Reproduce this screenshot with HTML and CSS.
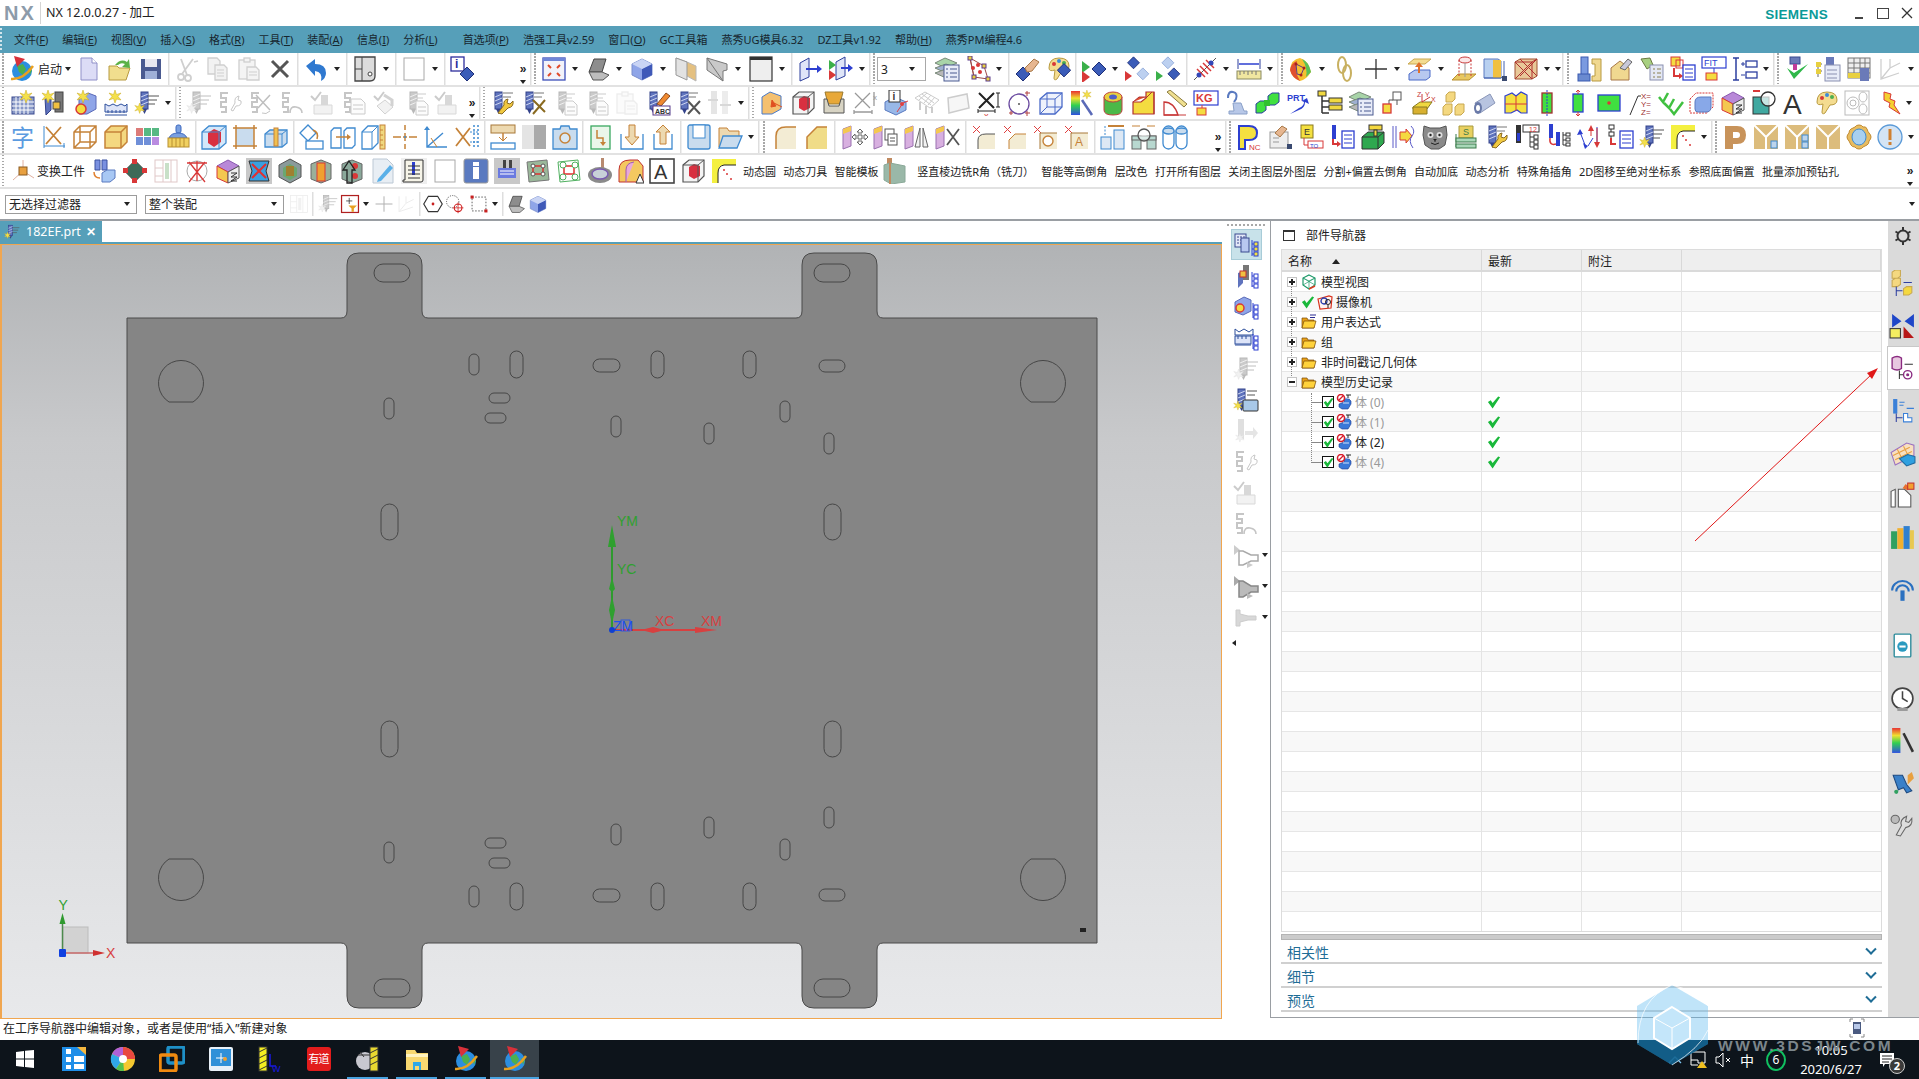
FILE: index.html
```html
<!DOCTYPE html>
<html lang="zh-CN">
<head>
<meta charset="utf-8">
<title>NX 12.0.0.27 - 加工</title>
<link rel="stylesheet" href="styles.css">
</head>
<body>
<svg class="defs" aria-hidden="true"><defs>
<g id="dr"><rect x="5" y="2" width="7" height="17" fill="#5f73bd" stroke="#33428a"/><path d="M5 7l7-3M5 11l7-3M5 15l7-3" stroke="#cdd5f0"/><path d="M6 19l2.500 5 2.500-5z" fill="#33428a"/></g>
<path id="ss" d="M11 3H4v5h5v4H4v5h5v5H4" fill="none" stroke="#6a6a6a" stroke-width="2"/>
<path id="star" d="M7 0l1.500 4.500L13 3l-3 3.500 3 3.500-4.500-1L7 13l-1.500-4.500L1 10l3-3.500L1 3l4.500 1.500z" fill="#f4e04a" stroke="#c8a820" stroke-width=".5"/>
<path id="dia" d="M8 1l7 7-7 7-7-7z" fill="#3b5cb8" stroke="#1e2f78"/>
<path id="ldia" d="M8 1l7 7-7 7-7-7z" fill="#bcd0f0" stroke="#8ea8d8"/>
<symbol id="globe" viewBox="0 0 26 26"><circle cx="13" cy="15" r="10" fill="#2c8ee0"/><path d="M8 10l6-2 3 5-3 6-4-3zM19 12l4 2-2 5z" fill="#4caf50"/><path d="M2 23Q14 24 24 10" fill="none" stroke="#e8a020" stroke-width="2.500"/><path d="M5 0l11 3-8 8z" fill="#d8313a"/></symbol>
<symbol id="doc" viewBox="0 0 26 26"><path d="M5 2h11l5 5v17H5z" fill="#dcdcf6" stroke="#8f8fc8"/><path d="M16 2v5h5" fill="#fff" stroke="#8f8fc8"/></symbol>
<symbol id="open" viewBox="0 0 26 26"><path d="M2 10h8l2 2h11l-4 12H2z" fill="#f1de8e" stroke="#b79a40"/><path d="M8 9q6-7 12-3l2-3 1 9-8-1 3-3q-4-2-7 1z" fill="#5cb247"/></symbol>
<symbol id="save" viewBox="0 0 26 26"><rect x="3" y="3" width="20" height="20" fill="#4a5a90"/><rect x="7" y="3" width="12" height="8" fill="#e8e8f0"/><rect x="7" y="15" width="12" height="8" fill="#9fb0d8"/></symbol>
<symbol id="cut" viewBox="0 0 26 26"><g fill="none" stroke="#cfcfcf" stroke-width="1.800"><circle cx="7" cy="21" r="3"/><circle cx="14" cy="22" r="3"/><path d="M8 18L19 3M13 19L7 3M20 6l4-1"/></g></symbol>
<symbol id="copy" viewBox="0 0 26 26"><g fill="#f2f2f2" stroke="#cfcfcf" stroke-width="1.300"><path d="M3 2h9l3 3v13H3z"/><path d="M10 9h9l3 3v12H10z"/></g><path d="M12 14h7M12 17h7M12 20h7" stroke="#cfcfcf"/></symbol>
<symbol id="paste" viewBox="0 0 26 26"><g fill="#f4f4f4" stroke="#cfcfcf" stroke-width="1.300"><rect x="3" y="4" width="16" height="19"/><rect x="8" y="2" width="6" height="4"/><path d="M11 11h9l3 3v10H11z"/></g><path d="M13 16h8M13 19h8" stroke="#cfcfcf"/></symbol>
<symbol id="xd" viewBox="0 0 26 26"><path d="M5 5l16 16M21 5L5 21" stroke="#555" stroke-width="3"/></symbol>
<symbol id="undo" viewBox="0 0 26 26"><path d="M3 10l9-7v5q11 0 11 9 0 5-5 8 2-9-6-10v5z" fill="#2f79d0"/></symbol>
<symbol id="blk" viewBox="0 0 26 26"><path d="M3 1h20v19q0 5-5 5H3z" fill="#dcdcdc" stroke="#444" stroke-width="1.300"/><path d="M3 13h7M10 1v24" stroke="#444"/><circle cx="18" cy="18" r="2" fill="#fff" stroke="#444"/></symbol>
<symbol id="wbox" viewBox="0 0 26 26"><rect x="3" y="2" width="20" height="22" fill="#fff" stroke="#a8a8a8"/></symbol>
<symbol id="info" viewBox="0 0 26 26"><rect x="1" y="1" width="13" height="14" fill="#fff" stroke="#2d2d9c" stroke-width="1.300"/><text x="5" y="12" font-size="12" font-weight="700" fill="#2d2d9c">i</text><use href="#dia" x="9" y="10"/></symbol>
<symbol id="fit" viewBox="0 0 26 26"><rect x="2" y="2" width="22" height="22" fill="#f2f3fa" stroke="#3d4fb8" stroke-width="1.300"/><rect x="2" y="2" width="22" height="3" fill="#6f86d8"/><path d="M7 9l3 3M19 9l-3 3M7 20l3-3M19 20l-3-3" stroke="#e04a2a" stroke-width="2"/></symbol>
<symbol id="lap" viewBox="0 0 26 26"><path d="M9 3h12l-4 13H4z" fill="#8d8d8d" stroke="#444"/><path d="M4 16h13l7 3-6 5H8z" fill="#bdbdbd" stroke="#555"/></symbol>
<symbol id="cube" viewBox="0 0 26 26"><path d="M3 8l10-5 10 5v11l-10 5-10-5z" fill="#8fa5e8" stroke="#7a8ecc"/><path d="M13 13v11l10-5V8z" fill="#3f59b8"/><path d="M3 8l10 5 10-5-10-5z" fill="#c9d4f4"/></symbol>
<symbol id="tan" viewBox="0 0 26 26"><path d="M3 2l11 4 9 4v15L14 20 3 15z" fill="#e4c080" stroke="#b8b8b8"/><path d="M3 2v17l11 5V6z" fill="#e2e2e2" stroke="#999"/></symbol>
<symbol id="slant" viewBox="0 0 26 26"><path d="M3 2l20 6v6l-4 1v10L3 14z" fill="#c9c9c9" stroke="#777"/><path d="M3 2l16 23" stroke="#777" fill="none"/></symbol>
<symbol id="hdr" viewBox="0 0 26 26"><rect x="2" y="1" width="22" height="24" fill="#eee" stroke="#333" stroke-width="1.200"/><rect x="2" y="1" width="22" height="3" fill="#333"/></symbol>
<symbol id="mv1" viewBox="0 0 26 26"><path d="M3 7l9-5v19l-9 4z" fill="#dfe5f8" stroke="#2d3f9c"/><path d="M9 13h14" stroke="#2d3fd0" stroke-width="2"/><path d="M20 9l5 4-5 4z" fill="#2d3fd0"/></symbol>
<symbol id="mv2" viewBox="0 0 26 26"><path d="M8 6l9-5v19l-9 4z" fill="#dfe5f8" stroke="#2d3f9c"/><path d="M1 4l7 5-7 5z" fill="#3bb04a"/><path d="M1 14l7 5-7 5z" fill="#d83838"/><path d="M13 12h10" stroke="#2d3fd0" stroke-width="2"/><path d="M20 8l5 4-5 4z" fill="#2d3fd0"/></symbol>
<symbol id="lay" viewBox="0 0 26 26"><g stroke="#7a8a7a"><path d="M1 7l10-5 12 5-11 5z" fill="#a8d4a8"/><path d="M1 12l11 5 11-5-11-4z" fill="#9fb0d0"/><path d="M1 17l11 5 11-5-11-4z" fill="#b8b8b8"/></g><rect x="10" y="9" width="15" height="16" fill="#e8ecf8" stroke="#4a5a90"/><path d="M12 13h2M16 13h7M12 17h2M16 17h7M12 21h2M16 21h7" stroke="#4a5a90"/></symbol>
<symbol id="pts" viewBox="0 0 26 26"><path d="M5 2l14 8 4 13-14-2z" fill="#fff" stroke="#9a4a4a"/><path d="M5 2l4 19" stroke="#9a4a4a"/><g fill="#d83838"><circle cx="13" cy="9" r="2"/><circle cx="8" cy="12" r="2"/><circle cx="15" cy="16" r="2"/></g><g fill="#e8d040" stroke="#5a3a8a"><rect x="3" y="0" width="4" height="4"/><rect x="17" y="8" width="4" height="4"/><rect x="21" y="21" width="4" height="4"/><rect x="7" y="19" width="4" height="4"/></g></symbol>
<symbol id="hand" viewBox="0 0 26 26"><use href="#dia" x="1" y="10"/><path d="M11 12l9-9 5 3-7 9-5 1z" fill="#e6b690" stroke="#a87848"/></symbol>
<symbol id="pal" viewBox="0 0 26 26"><path d="M4 12Q4 2 14 2t10 8q0 5-7 5l-5 8q-3 2-3-1l1-8Q4 16 4 12z" fill="#f4dc90" stroke="#b89a40"/><g stroke="none"><circle cx="9" cy="8" r="2" fill="#d83838"/><circle cx="14" cy="5" r="2" fill="#3b8cd8"/><circle cx="19" cy="7" r="2" fill="#4caf50"/></g></symbol>
<symbol id="palb" viewBox="0 0 26 26"><use href="#pal"/><use href="#dia" x="12" y="7" transform="scale(.95)"/></symbol>
<symbol id="d1" viewBox="0 0 26 26"><path d="M1 5l8 6-8 6z" fill="#3bb04a"/><path d="M1 15l8 6-8 6z" fill="#d83838"/><use href="#dia" x="10" y="5"/></symbol>
<symbol id="d2" viewBox="0 0 26 26"><use href="#dia" x="2" y="0" transform="scale(.85)"/><use href="#ldia" x="13" y="13" transform="scale(.85)"/><path d="M0 15l7 5-7 5z" fill="#d83838"/></symbol>
<symbol id="d3" viewBox="0 0 26 26"><use href="#ldia" x="6" y="0" transform="scale(.85)"/><use href="#dia" x="13" y="13" transform="scale(.85)"/><path d="M0 15l7 5-7 5z" fill="#3bb04a"/></symbol>
<symbol id="ant" viewBox="0 0 26 26"><path d="M2 24L24 2" stroke="#555"/><path d="M5 13l8 8M8 10l8 8M11 7l8 8M14 4l8 8" stroke="#d83838" stroke-width="1.500"/><circle cx="7" cy="19" r="2.500" fill="#3447b8"/><circle cx="19" cy="7" r="2.500" fill="#3447b8"/></symbol>
<symbol id="rul" viewBox="0 0 26 26"><path d="M2 3v10M24 3v10" stroke="#2d3f9c"/><path d="M3 8h20" stroke="#2d3fd0" stroke-width="1.500"/><rect x="1" y="15" width="24" height="8" fill="#f0e6a0" stroke="#8a8a60"/><path d="M4 15v4M8 15v3M12 15v4M16 15v3M20 15v4" stroke="#777"/></symbol>
<symbol id="heat" viewBox="0 0 26 26"><path d="M2 14Q3 3 12 2q8 2 11 14-5 8-11 9Q4 22 2 14z" fill="#f4c030"/><path d="M2 14Q3 7 9 5 6 16 12 25 4 22 2 14z" fill="#e05030"/><path d="M14 3q7 3 9 13l-5 5q2-9-4-18z" fill="#58c058"/><path d="M8 8l8 4-3 7-4-1z" fill="none" stroke="#5a3a8a"/><g fill="#a82020"><circle cx="8" cy="8" r="1.500"/><circle cx="16" cy="12" r="1.500"/><circle cx="13" cy="19" r="1.500"/></g></symbol>
<symbol id="ring" viewBox="0 0 26 26"><g fill="none" stroke="#c8b060" stroke-width="2"><ellipse cx="10" cy="9" rx="4" ry="8"/><ellipse cx="15" cy="17" rx="4" ry="8"/></g></symbol>
<symbol id="plus" viewBox="0 0 26 26"><path d="M13 3v20M2 13h22" stroke="#333" stroke-width="1.300"/></symbol>
<symbol id="lift" viewBox="0 0 26 26"><path d="M7 3h17l-6 5H1z" fill="#f4dc90" stroke="#c8a850"/><path d="M2 18l6-4h15v7l-4 3H2z" fill="#b8c8f0" stroke="#4a6ac8"/><path d="M12 17V9" stroke="#e0702a" stroke-width="2"/><path d="M8 11l4-5 4 5z" fill="#e0702a"/></symbol>
<symbol id="cyl" viewBox="0 0 26 26"><path d="M1 24l6-6h18l-7 6z" fill="#e8c860" stroke="#b89030"/><ellipse cx="14" cy="4" rx="6" ry="3" fill="#fbe8e8" stroke="#c83838"/><path d="M8 4v16M20 4v16" stroke="#c83838" stroke-dasharray="2 1.500"/><path d="M14 7v14" stroke="#999"/></symbol>
<symbol id="bbx" viewBox="0 0 26 26"><path d="M2 3h14l3 2v17H2z" fill="#b8d0f0" stroke="#5a7ac0"/><path d="M11 4h8v18h-8z" fill="#f0c040"/><path d="M2 22h17l3-2V5" fill="none" stroke="#4060b0"/><rect x="20" y="20" width="5" height="5" fill="#3a4a70"/></symbol>
<symbol id="wcube" viewBox="0 0 26 26"><path d="M2 6l5-3h17v17l-5 3H2z" fill="#e8c898" stroke="#a05030"/><path d="M2 6h17v17M19 6l5-3M2 6l17 17M19 6L2 23M7 3l17 17M24 3L7 20" fill="none" stroke="#b03030"/></symbol>
<symbol id="bolt" viewBox="0 0 26 26"><rect x="4" y="1" width="7" height="19" fill="#7a9ae0" stroke="#3a5ab0"/><rect x="1" y="18" width="12" height="7" fill="#6a8ad0" stroke="#3a5ab0"/><path d="M15 3h9v22h-9v-5h3V8h-3z" fill="#f0d890" stroke="#b89a40"/></symbol>
<symbol id="house" viewBox="0 0 26 26"><path d="M3 12l9-7 9 7v12H3z" fill="#f0d890" stroke="#a87848"/><path d="M12 12l8-9 4 3-7 8z" fill="#c8c8d8" stroke="#666"/></symbol>
<symbol id="lamp" viewBox="0 0 26 26"><path d="M2 3l9-1 3 7-6 4z" fill="#a8d080" stroke="#6a7a40"/><rect x="11" y="9" width="13" height="15" fill="#e4e8f4" stroke="#8a90b0"/><path d="M14 13h2M18 13h4M14 17h2M18 17h4M14 21h2M18 21h4" stroke="#8a8050"/></symbol>
<symbol id="flw" viewBox="0 0 26 26"><rect x="1" y="1" width="9" height="9" fill="#f4dc40" stroke="#d83838"/><rect x="6" y="4" width="7" height="8" fill="none" stroke="#d83838"/><path d="M4 12v8h6" fill="none" stroke="#d83838" stroke-width="2"/><path d="M9 17l4 3-4 3z" fill="#d83838"/><rect x="13" y="9" width="12" height="15" fill="#fff" stroke="#2d3fd0" stroke-width="1.300"/><path d="M15 13h8M15 17h8M15 21h8" stroke="#2d3fd0"/></symbol>
<symbol id="fit2" viewBox="0 0 26 26"><rect x="1" y="1" width="24" height="11" fill="#fff" stroke="#2d3fd0" stroke-width="1.200"/><text x="3" y="10" font-size="9" fill="#2d3fd0">FIT</text><path d="M13 12v5" stroke="#2d3fd0"/><rect x="5" y="17" width="11" height="7" fill="#f4dc40" stroke="#d83838"/></symbol>
<symbol id="lst" viewBox="0 0 26 26"><path d="M4 2v22M1 2h6M1 24h6" stroke="#2d3fa0" stroke-width="1.500"/><path d="M9 8h4M11 6v4M9 19h4" stroke="#2d3fa0"/><rect x="14" y="5" width="11" height="6" fill="#fff" stroke="#2d3fa0" stroke-width="1.300"/><rect x="14" y="16" width="11" height="6" fill="#fff" stroke="#2d3fa0" stroke-width="1.300"/></symbol>
<symbol id="vchk" viewBox="0 0 26 26"><rect x="6" y="1" width="10" height="7" fill="#6a7ab8" stroke="#3a4a90"/><path d="M9 8h4v6h-4z" fill="#c03a9a"/><path d="M3 12l7 11L24 8l-14 9z" fill="#2fb84a"/></symbol>
<symbol id="tre2" viewBox="0 0 26 26"><rect x="11" y="1" width="8" height="9" fill="#6a7ab8"/><rect x="10" y="9" width="15" height="16" fill="#e8ecf8" stroke="#8a90b0"/><path d="M3 8v13M3 8h4M3 15h4" stroke="#666"/><rect x="1" y="6" width="5" height="5" fill="#e8d040"/><rect x="1" y="13" width="5" height="5" fill="#e8d040"/><path d="M12 14h10M12 18h10M12 22h10" stroke="#8a90b0"/></symbol>
<symbol id="tbl" viewBox="0 0 26 26"><rect x="2" y="2" width="22" height="20" fill="#eee" stroke="#777"/><path d="M2 7h22M2 12h22M2 17h22M8 2v20M14 2v20M19 2v20" stroke="#777"/><rect x="2" y="17" width="12" height="5" fill="#e8d040"/><rect x="14" y="12" width="9" height="13" fill="#6a7ab8"/></symbol>
<symbol id="axg" viewBox="0 0 26 26"><path d="M4 3v20l18-6M4 23l9-11 10-5M13 3v9" fill="none" stroke="#cfcfcf" stroke-width="1.300"/></symbol>
<symbol id="a2a" viewBox="0 0 26 26"><rect x="2" y="7" width="22" height="17" fill="#8a9ac8" stroke="#3a4a90"/><path d="M6 7v17M10 7v17M14 7v17M18 7v17M2 12h22M2 16h22M2 20h22" stroke="#fff"/><use href="#star" x="9" y="0"/></symbol>
<symbol id="a2b" viewBox="0 0 26 26"><path d="M4 8l6-1v13l-5 5z" fill="#5f73bd" stroke="#33428a"/><rect x="14" y="2" width="8" height="20" fill="#777" stroke="#444"/><rect x="12" y="12" width="7" height="7" fill="#f0c040" stroke="#444"/><use href="#star"/></symbol>
<symbol id="a2c" viewBox="0 0 26 26"><path d="M7 8l9-5 8 3v13l-9 5H7z" fill="#8fa5e8" stroke="#5a6ab8"/><circle cx="9" cy="19" r="5" fill="#f4dc40" stroke="#d83838" stroke-width="1.500"/><use href="#star" x="4"/></symbol>
<symbol id="a2d" viewBox="0 0 26 26"><path d="M2 14l4 2 4-2 4 2 4-2 4 2 2-2v8H2z" fill="#dde4f8" stroke="#2d4f9c"/><path d="M2 25h22M5 20v3M9 20v3M13 20v3M17 20v3M21 20v3" stroke="#2d4f9c"/><use href="#star" x="5"/></symbol>
<symbol id="drl" viewBox="0 0 26 26"><use href="#dr" x="2"/><path d="M14 6h11M14 10h9M14 14h7" stroke="#555"/><use href="#star" transform="translate(0 13) scale(.8)"/></symbol>
<symbol id="swr" viewBox="0 0 26 26"><use href="#ss"/><path d="M14 20l4-7q-1-6 4-7l-1 4 3 1q1 5-5 5l-3 5z" fill="#fff" stroke="#6a6a6a"/></symbol>
<symbol id="sx" viewBox="0 0 26 26"><use href="#ss"/><path d="M8 5l14 15M22 5L10 18" stroke="#555" stroke-width="1.500"/><path d="M14 23q4 2 8-2" fill="none" stroke="#666"/></symbol>
<symbol id="scv" viewBox="0 0 26 26"><use href="#ss"/><path d="M11 23q0-7 6-6t6 6" fill="none" stroke="#666" stroke-width="1.600"/></symbol>
<symbol id="cktl" viewBox="0 0 26 26"><path d="M1 6l4 4 6-8" fill="none" stroke="#777" stroke-width="2"/><rect x="11" y="5" width="7" height="13" fill="#999"/><path d="M4 15h18v9H4z" fill="#ddd" stroke="#999"/></symbol>
<symbol id="sdoc" viewBox="0 0 26 26"><use href="#ss"/><path d="M10 9h10l4 4v11H10z" fill="#f6f6f6" stroke="#777"/><path d="M12 15h10M12 19h10" stroke="#777"/></symbol>
<symbol id="ckw" viewBox="0 0 26 26"><path d="M2 6l4 4 6-8" fill="none" stroke="#777" stroke-width="2"/><path d="M5 16l8-6 8 7-8 7z" fill="#ddd" stroke="#888"/><path d="M12 5l8 5v6" fill="none" stroke="#888" stroke-width="3"/></symbol>
<symbol id="drdoc" viewBox="0 0 26 26"><use href="#dr" x="2"/><path d="M13 11h8l4 4v10H13z" fill="#f6f6f6" stroke="#777"/><path d="M15 17h8M15 21h8" stroke="#777"/><path d="M14 4h9M14 8h6" stroke="#777"/></symbol>
<symbol id="dw" viewBox="0 0 26 26"><use href="#dr"/><path d="M13 3h10M13 7h8" stroke="#777"/><path d="M8 23l6-8q-1-5 4-6l-1 4 3 1 3-3q1 6-5 7l-6 6z" fill="#f0c840" stroke="#8a6a20"/></symbol>
<symbol id="ds" viewBox="0 0 26 26"><use href="#dr"/><path d="M13 3h10M13 7h8" stroke="#777"/><path d="M12 10l12 12M24 10L12 24" stroke="#8a6a20" stroke-width="2"/></symbol>
<symbol id="pen" viewBox="0 0 26 26"><use href="#dr"/><path d="M12 14L21 3l4 3-9 10z" fill="#f08a30" stroke="#8a4a20"/><rect x="8" y="16" width="17" height="9" fill="#fff" stroke="#5a3a8a"/><text x="10" y="23.500" font-size="7" font-weight="700" fill="#333">ABC</text></symbol>
<symbol id="dx" viewBox="0 0 26 26"><use href="#dr"/><path d="M13 3h9M13 7h7" stroke="#777"/><path d="M12 11l12 13M24 11L12 24" stroke="#555" stroke-width="2"/></symbol>
<symbol id="ga" viewBox="0 0 26 26"><rect x="4" y="1" width="6" height="23" fill="#bbb"/><rect x="15" y="1" width="6" height="23" fill="#ccc"/><path d="M1 10h10M13 15h11" stroke="#999" stroke-width="2"/></symbol>
<symbol id="obox" viewBox="0 0 26 26"><path d="M3 7l8-5 11 4v13l-9 5H3z" fill="#f4c070" stroke="#4a7ac8"/><path d="M13 10l4 6-5 1zM15 13l8 4" fill="#e05020" stroke="#e05020"/></symbol>
<symbol id="rwr" viewBox="0 0 26 26"><path d="M3 7l6-5h15v16l-6 6H3z" fill="#f4f4f4" stroke="#555" stroke-width="1.200"/><path d="M9 9l5-3 6 2v10l-6 3-5-3z" fill="#d83040"/><path d="M3 7h15v17M18 7l6-5" fill="none" stroke="#555"/></symbol>
<symbol id="cup" viewBox="0 0 26 26"><path d="M4 2h18l-3 12h-12z" fill="#e8a838" stroke="#9a7a30"/><path d="M3 9v14h20V9l-3 0-2 7H8L6 9z" fill="#d8d4c4" stroke="#555"/></symbol>
<symbol id="gxd" viewBox="0 0 26 26"><path d="M3 3l15 15M18 3L3 18M2 22h18M2 20v4M20 20v4M22 2v14" stroke="#999" stroke-width="1.300" fill="none"/><text x="21" y="10" font-size="8" fill="#999">x</text></symbol>
<symbol id="ii" viewBox="0 0 26 26"><path d="M2 12l10-5 11 5v8l-10 5-11-5z" fill="#98b8e8" stroke="#5a7ac0"/><rect x="6" y="0" width="11" height="12" fill="#fff" stroke="#333"/><text x="9.500" y="10" font-size="10" font-weight="700" fill="#333">i</text><path d="M14 22l6-9 5-2" stroke="#e04040" fill="none"/><circle cx="19" cy="14" r="2" fill="#e04040"/></symbol>
<symbol id="gg" viewBox="0 0 26 26"><path d="M1 8l10-6 14 8-9 8z" fill="#fff" stroke="#ccc"/><path d="M5 6l12 9M8 4l12 9M13 3l-8 7M17 5l-7 8M21 7l-7 8" stroke="#ccc"/><path d="M6 12v8M12 16v8M18 17v6" stroke="#ccc" stroke-width="2"/></symbol>
<symbol id="gp" viewBox="0 0 26 26"><path d="M3 8l19-4 2 14-20 5z" fill="#f6f6f6" stroke="#ccc" stroke-width="1.500"/></symbol>
<symbol id="xdim" viewBox="0 0 26 26"><path d="M3 3l15 15M18 3L3 18" stroke="#222" stroke-width="2"/><path d="M2 21h17M2 19v4M19 19v4" stroke="#222"/><path d="M20 3h4M22 3v14M20 17h4" stroke="#222"/><text x="8" y="29" font-size="9" fill="#d83838">x</text></symbol>
<symbol id="cdot" viewBox="0 0 26 26"><ellipse cx="12" cy="14" rx="10" ry="10" fill="#fff" stroke="#6a4aa0" stroke-width="1.300"/><circle cx="12" cy="14" r="1" fill="#555"/><path d="M20 1v5M18 3h5M20 21v5M18 23h5M2 23h4M4 21v4" stroke="#b04040"/></symbol>
<symbol id="bwr" viewBox="0 0 26 26"><path d="M2 9l7-6h15v14l-7 7H2z" fill="#eef2fc" stroke="#4a6ac8" stroke-width="1.300"/><path d="M2 9h15v15M17 9l7-6M2 24l7-7h15M9 3v14" fill="none" stroke="#4a6ac8"/></symbol>
<symbol id="rain" viewBox="0 0 26 26"><defs><linearGradient id="rg" x2="0" y2="1"><stop stop-color="#e83030"/><stop offset=".3" stop-color="#f0e030"/><stop offset=".6" stop-color="#30d050"/><stop offset="1" stop-color="#3050e0"/></linearGradient></defs><rect x="2" y="1" width="9" height="24" fill="url(#rg)"/><path d="M13 10l10 15" stroke="#5a6ab8" stroke-width="2.500"/><use href="#star" transform="translate(13 0) scale(.7)"/></symbol>
<symbol id="grng" viewBox="0 0 26 26"><path d="M4 7v13q0 5 9 5t9-5V7z" fill="#4cb848" stroke="#c04040"/><ellipse cx="13" cy="7" rx="9" ry="5" fill="#e8d040" stroke="#c04040"/><ellipse cx="13" cy="7" rx="4" ry="2.500" fill="#5060c8"/></symbol>
<symbol id="ystp" viewBox="0 0 26 26"><path d="M2 12h8l5-4V2h8v22H2z" fill="#f4dc40" stroke="#b03030" stroke-width="1.200"/><path d="M2 12l6-5h7M15 8l6-6M23 2v22" fill="#e05030" stroke="#b03030"/></symbol>
<symbol id="arc" viewBox="0 0 26 26"><path d="M2 25V12q10 0 14 13z" fill="#fff" stroke="#c83838" stroke-width="1.300"/><path d="M2 25h22" stroke="#c83838"/><path d="M5 2l3-2 17 14-3 3z" fill="#f0e090" stroke="#8a7a40"/></symbol>
<symbol id="kg" viewBox="0 0 26 26"><rect x="1" y="1" width="24" height="14" fill="#fff" stroke="#2d3fd0" stroke-width="1.200"/><text x="3" y="12" font-size="11" font-weight="700" fill="#d83838">KG</text><path d="M9 15v3" stroke="#d83838"/><rect x="4" y="18" width="9" height="7" fill="#f4dc40" stroke="#d83838"/></symbol>
<symbol id="hook" viewBox="0 0 26 26"><path d="M4 8q0-7 5-6t3 7l-2 3" fill="none" stroke="#5a7ac0" stroke-width="2"/><path d="M9 13h8l3 8h3v3H5v-3h5z" fill="#b8c8e8" stroke="#8aa0c8"/></symbol>
<symbol id="gcb" viewBox="0 0 26 26"><path d="M1 14l4-3h6v9l-4 3H1zM13 6l4-3h7v9l-4 3h-7z" fill="#40e040" stroke="#2d3fa0"/><rect x="9" y="10" width="6" height="6" fill="#30c030"/></symbol>
<symbol id="prt" viewBox="0 0 26 26"><text x="1" y="11" font-size="9" font-weight="700" fill="#2d3fd0">PRT</text><path d="M4 24l9-4q6-2 6-8l4 2-2-6-5 3 2 1q0 4-5 6z" fill="#2d3fd0"/></symbol>
<symbol id="tre" viewBox="0 0 26 26"><rect x="1" y="1" width="8" height="5" fill="#f0d840" stroke="#333"/><path d="M5 6v17M5 11h7M5 17h7M5 23h7" stroke="#333" stroke-width="1.500"/><rect x="12" y="8" width="13" height="5" fill="#f0d840" stroke="#333"/><rect x="12" y="15" width="13" height="5" fill="#f0d840" stroke="#333"/></symbol>
<symbol id="sq" viewBox="0 0 26 26"><rect x="14" y="2" width="8" height="8" fill="#fff" stroke="#555"/><path d="M14 10H10v5M18 10v5" fill="none" stroke="#555"/><rect x="4" y="14" width="8" height="9" fill="#f4dc40" stroke="#d83838" stroke-width="1.300"/></symbol>
<symbol id="xyz" viewBox="0 0 26 26"><path d="M3 17l7-5h12l-5 7H3z" fill="#f0d840" stroke="#8a7a20"/><path d="M3 24v-7h14v7z" fill="#d8b030" stroke="#8a7a20"/><path d="M12 12V4M12 12l8-5" stroke="#c83838"/><text x="7" y="7" font-size="7" fill="#c83838">Z</text><text x="15" y="7" font-size="7" fill="#c83838">Y</text><text x="21" y="12" font-size="7" fill="#c83838">X</text></symbol>
<symbol id="ycb" viewBox="0 0 26 26"><g fill="#f4d880" stroke="#c8a850"><path d="M5 5l3-3h6v7l-3 3H5z"/><path d="M2 17l3-3h6v8l-3 3H2z"/><path d="M14 17l3-3h6v8l-3 3h-6z"/></g></symbol>
<symbol id="pipe" viewBox="0 0 26 26"><path d="M3 13L18 4l5 9-15 10z" fill="#b8c4e0" stroke="#8a96b8"/><ellipse cx="6" cy="18" rx="4" ry="6" fill="#6a7aa8"/><ellipse cx="6" cy="18" rx="2" ry="3" fill="#fff"/></symbol>
<symbol id="ybl" viewBox="0 0 26 26"><path d="M2 6l7-3 4 3 5-4 6 3v18h-6l-4-3-6 3H2z" fill="#f4e040" stroke="#2d3fd0" stroke-width="1.200"/><path d="M13 6v15M2 14h22" stroke="#d83838"/></symbol>
<symbol id="gb1" viewBox="0 0 26 26"><rect x="8" y="3" width="10" height="20" fill="#40e040" stroke="#a03030" stroke-width="1.300"/><path d="M13 0v26" stroke="#2d3fd0" stroke-dasharray="2 1"/></symbol>
<symbol id="gb2" viewBox="0 0 26 26"><rect x="8" y="4" width="10" height="18" fill="#40e040" stroke="#2d3fd0" stroke-width="1.300"/><path d="M13 0v4M13 22v4M11 2l2-2 2 2M11 24l2 2 2-2" stroke="#d83838" fill="none"/></symbol>
<symbol id="gb3" viewBox="0 0 26 26"><rect x="2" y="5" width="22" height="16" fill="#40e040" stroke="#2d3fd0" stroke-width="1.300"/><circle cx="13" cy="13" r="1.800" fill="#d83838"/></symbol>
<symbol id="xyzt" viewBox="0 0 26 26"><path d="M3 25L11 6M11 6h3" stroke="#333"/><text x="14" y="9" font-size="8" fill="#a03030">X=</text><text x="14" y="17" font-size="8" fill="#a03030">Y=</text><text x="14" y="25" font-size="8" fill="#a03030">Z=</text></symbol>
<symbol id="chk3" viewBox="0 0 26 26"><path d="M1 7l4 5 5-9M6 13l5 5 5-9M12 19l4 5 9-12" fill="none" stroke="#40c040" stroke-width="2.500"/></symbol>
<symbol id="rbox" viewBox="0 0 26 26"><path d="M1 9l6-6h17v14l-6 6H1z" fill="none" stroke="#d83838" stroke-dasharray="2 1"/><path d="M6 12q0-5 6-5h10v10q0 5-5 5H9q-3 0-3-3z" fill="#88a8e8" stroke="#5a7ac0"/></symbol>
<symbol id="pcb" viewBox="0 0 26 26"><path d="M2 8l11-6 11 6-11 6z" fill="#b888d8" stroke="#8a5ab0"/><path d="M2 8v12l11 5V14z" fill="#f4c850" stroke="#d83838"/><path d="M13 14v11l11-5V8z" fill="#eee" stroke="#555"/><path d="M16 15h6l-6 4h6l-6 4h6" fill="none" stroke="#333"/></symbol>
<symbol id="tea" viewBox="0 0 26 26"><path d="M2 1h7" stroke="#d83838" stroke-width="2"/><rect x="2" y="7" width="16" height="17" fill="#40a8a0" stroke="#333"/><circle cx="17" cy="9" r="7" fill="#fff" fill-opacity=".7" stroke="#333" stroke-width="1.300"/></symbol>
<symbol id="big" viewBox="0 0 26 26"><text x="1" y="24" font-size="28" font-family="Liberation Serif" fill="#333">A</text></symbol>
<symbol id="gc" viewBox="0 0 26 26"><rect x="1" y="1" width="24" height="24" fill="#fff" stroke="#bbb"/><g fill="none" stroke="#bbb"><circle cx="9" cy="13" r="6"/><circle cx="9" cy="13" r="3"/><ellipse cx="19" cy="7" rx="4" ry="5"/><ellipse cx="19" cy="19" rx="4" ry="5"/></g></symbol>
<symbol id="ltn" viewBox="0 0 26 26"><path d="M9 2l7 2-1 5 5 2-1 4 6 9-11-7 1-4-6-3z" fill="#f4d030" stroke="#d83838"/></symbol>
<symbol id="zi" viewBox="0 0 26 26"><text x="1" y="22" font-size="23" fill="#5b9be0">字</text></symbol>
<symbol id="dim" viewBox="0 0 26 26"><path d="M5 3l15 17M20 3L5 20" stroke="#c58238" stroke-width="1.800"/><path d="M3 2v22M3 22h21M23 19v5" stroke="#3f8ad0"/></symbol>
<symbol id="wbo" viewBox="0 0 26 26"><path d="M2 8l6-6h16v16l-6 6H2zM2 8h16v16M18 8l6-6M2 24l6-6h16M8 2v16" fill="none" stroke="#c58238" stroke-width="1.500"/></symbol>
<symbol id="sbo" viewBox="0 0 26 26"><path d="M2 8l6-6h16v16l-6 6H2z" fill="#f4d880" stroke="#c58238" stroke-width="1.500"/><path d="M2 8h16v16M18 8l6-6" fill="none" stroke="#c58238" stroke-width="1.500"/></symbol>
<symbol id="cgr" viewBox="0 0 26 26"><rect x="2" y="4" width="7" height="8" fill="#dc7b78"/><rect x="10" y="4" width="7" height="8" fill="#57b883"/><rect x="18" y="4" width="7" height="8" fill="#57b883"/><rect x="2" y="13" width="7" height="8" fill="#6f8fd8"/><rect x="10" y="13" width="7" height="8" fill="#6f8fd8"/><rect x="18" y="13" width="7" height="8" fill="#b98be0"/></symbol>
<symbol id="brs" viewBox="0 0 26 26"><rect x="11" y="1" width="5" height="8" rx="2" fill="#7aa0e0" stroke="#3f6ac0"/><path d="M4 14q2-5 9-5t9 5z" fill="#7aa0e0" stroke="#3f6ac0"/><rect x="3" y="14" width="21" height="9" fill="#f0d060" stroke="#b89030"/><path d="M7 14v9M11 14v9M15 14v9M19 14v9" stroke="#b89030"/></symbol>
<symbol id="rcb" viewBox="0 0 26 26"><path d="M1 8l7-6h17v17l-7 6H1z" fill="#d4e8fa" stroke="#3f8ad0" stroke-width="1.300"/><path d="M7 9l6-4 7 3v10l-7 5-6-4z" fill="#d83040"/><path d="M1 8h17v17M18 8l7-6" fill="none" stroke="#3f8ad0"/></symbol>
<symbol id="pbx" viewBox="0 0 26 26"><rect x="4" y="4" width="18" height="18" fill="#c9dcee"/><path d="M1 4h24M1 22h24M4 1v24M22 1v24" stroke="#c58238" stroke-width="1.500"/></symbol>
<symbol id="hbx" viewBox="0 0 26 26"><path d="M2 10l5-4h17v13l-5 4H2z" fill="#c9dcee" stroke="#3f8ad0" stroke-width="1.300"/><path d="M2 10h17v13M19 10l5-4" fill="none" stroke="#3f8ad0"/><rect x="11" y="4" width="4" height="18" fill="#f0c050" stroke="#c58238"/></symbol>
<symbol id="rot" viewBox="0 0 26 26"><path d="M1 9l8-8 8 8-8 8z" fill="#fff" stroke="#3f8ad0" stroke-width="1.300"/><rect x="7" y="17" width="17" height="8" fill="#fff" stroke="#3f8ad0" stroke-width="1.300"/><path d="M14 6q6 2 4 9" fill="none" stroke="#c58238" stroke-width="1.500"/></symbol>
<symbol id="mvb" viewBox="0 0 26 26"><path d="M1 7l3-3h7v20H1zM14 7l3-3h8v17l-3 3h-8z" fill="#fff" stroke="#3f8ad0" stroke-width="1.300"/><path d="M6 13h13" stroke="#c58238" stroke-width="1.500"/><path d="M17 10l4 3-4 3z" fill="#c58238"/></symbol>
<symbol id="rlb" viewBox="0 0 26 26"><path d="M1 8l6-6h10v17l-6 6H1z" fill="#fff" stroke="#3f8ad0" stroke-width="1.300"/><path d="M1 8h10v17M11 8l6-6" fill="none" stroke="#3f8ad0"/><rect x="19" y="1" width="5" height="24" fill="#f0d880" stroke="#c58238"/><path d="M19 6h3M19 11h3M19 16h3M19 21h3" stroke="#c58238"/></symbol>
<symbol id="crs" viewBox="0 0 26 26"><path d="M1 13h8M11 13h4M17 13h8M13 1v5M13 9v8M13 20v5" stroke="#c58238" stroke-width="1.500"/><circle cx="13" cy="13" r="1" fill="#3f8ad0"/></symbol>
<symbol id="axs" viewBox="0 0 26 26"><path d="M4 3v20h20M4 23L20 9" fill="none" stroke="#3f8ad0" stroke-width="1.400"/><path d="M1 6l3-4 3 4z" fill="#3f8ad0"/><path d="M8 14l6 9" stroke="#c58238" fill="none"/></symbol>
<symbol id="xls" viewBox="0 0 26 26"><path d="M2 4l14 18M16 4L2 22" stroke="#c58238" stroke-width="1.800"/><path d="M20 1v24M24 1v24" stroke="#3f8ad0" stroke-dasharray="2 2" stroke-width="1.500"/><path d="M16 8h8M16 18h8" stroke="#3f8ad0" stroke-dasharray="2 1"/></symbol>
<symbol id="ra" viewBox="0 0 26 26"><rect x="1" y="1" width="24" height="8" fill="#edd9b0" stroke="#a87838"/><rect x="1" y="19" width="24" height="6" fill="#fff" stroke="#3f8ad0" stroke-width="1.300"/><path d="M13 9v7" stroke="#c58238" stroke-width="1.500"/><path d="M9 13l4 4 4-4" fill="none" stroke="#c58238"/></symbol>
<symbol id="hgr" viewBox="0 0 26 26"><rect x="1" y="1" width="12" height="24" fill="#e4e4e4"/><rect x="13" y="1" width="12" height="24" fill="#aaa"/></symbol>
<symbol id="cam" viewBox="0 0 26 26"><path d="M1 5h7l1-3h8l1 3h7v20H1z" fill="#c9dcee" stroke="#3f8ad0" stroke-width="1.300"/><circle cx="13" cy="14" r="5" fill="#d9e8f4" stroke="#c58238" stroke-width="1.500"/></symbol>
<symbol id="gs" viewBox="0 0 26 26"><rect x="3" y="2" width="19" height="23" fill="#eaf6ea" stroke="#3aa860" stroke-width="1.300"/><path d="M9 6v8h6v6" fill="none" stroke="#c58238" stroke-width="1.500"/><path d="M12 18l3 4 3-4z" fill="#c58238"/></symbol>
<symbol id="dnb" viewBox="0 0 26 26"><path d="M2 10v15h22V10" fill="#fff" stroke="#3f8ad0" stroke-width="1.300"/><path d="M10 1h6v12h4l-7 8-7-8h4z" fill="#edd9b0" stroke="#c58238"/></symbol>
<symbol id="upb" viewBox="0 0 26 26"><path d="M4 10v15h18V10" fill="#fff" stroke="#3f8ad0" stroke-width="1.300"/><path d="M10 20V8H6l7-7 7 7h-4v12z" fill="#edd9b0" stroke="#c58238"/></symbol>
<symbol id="sv2" viewBox="0 0 26 26"><rect x="2" y="1" width="22" height="24" rx="2" fill="#c9dcee" stroke="#3f8ad0" stroke-width="1.300"/><rect x="7" y="1" width="12" height="13" fill="#fff" stroke="#3f8ad0"/></symbol>
<symbol id="fd2" viewBox="0 0 26 26"><path d="M2 4h8l2 3h10v6H8l-3 10H2z" fill="#edd9b0" stroke="#c58238"/><path d="M6 12h19l-5 12H2z" fill="#c9dcee" stroke="#3f8ad0" stroke-width="1.300"/></symbol>
<symbol id="co1" viewBox="0 0 26 26"><path d="M3 25V12Q3 3 13 3h10v22z" fill="#f3ecd4"/><path d="M3 25V12Q3 3 13 3h10" fill="none" stroke="#c58238" stroke-width="1.500"/></symbol>
<symbol id="co2" viewBox="0 0 26 26"><path d="M3 25V13L13 3h10v22z" fill="#f0dc88"/><path d="M3 25V13L13 3h10" fill="none" stroke="#c58238" stroke-width="1.500"/></symbol>
<g id="lil"><path d="M1 5l8-3v20l-8 3z" fill="#d8b0e0" stroke="#9a70b0"/><path d="M1 5l8-3v5l-8 3z" fill="#f4c850"/></g>
<symbol id="l1" viewBox="0 0 26 26"><use href="#lil"/><path d="M18 5l3 3h-2v4h4v-2l3 3-3 3v-2h-4v4h2l-3 3-3-3h2v-4h-4v2l-3-3 3-3v2h4V8h-2z" fill="#fff" stroke="#666"/></symbol>
<symbol id="l2" viewBox="0 0 26 26"><use href="#lil"/><rect x="12" y="5" width="9" height="11" fill="#fff" stroke="#555"/><rect x="15" y="10" width="9" height="11" fill="#fff" stroke="#555"/><path d="M17 14h5M17 17h5" stroke="#555"/></symbol>
<symbol id="l3" viewBox="0 0 26 26"><use href="#lil"/><path d="M16 4l-5 19h5zM19 4l5 19h-5z" fill="#f2f2f2" stroke="#666"/></symbol>
<symbol id="l4" viewBox="0 0 26 26"><use href="#lil"/><path d="M12 5l12 16M24 5L12 21" stroke="#555" stroke-width="1.800"/></symbol>
<symbol id="xc1" viewBox="0 0 26 26"><path d="M2 2l7 7M9 2L2 9" stroke="#e04040"/><path d="M7 25V16q0-6 8-6h9v15z" fill="#f3ecd4"/><path d="M7 25V16q0-6 8-6h9" fill="none" stroke="#555"/></symbol>
<symbol id="xc2" viewBox="0 0 26 26"><path d="M2 2l7 7M9 2L2 9" stroke="#e04040"/><path d="M7 25V16l6-6h11v15z" fill="#f3ecd4"/><path d="M7 25V16l6-6h11" fill="none" stroke="#c58238"/></symbol>
<symbol id="xc3" viewBox="0 0 26 26"><path d="M1 2l7 7M8 2L1 9" stroke="#e04040"/><rect x="7" y="9" width="17" height="16" fill="#f3ecd4"/><path d="M7 25V9h17" fill="none" stroke="#a87838"/><circle cx="15" cy="17" r="5" fill="#fff" stroke="#c58238" stroke-width="1.400"/></symbol>
<symbol id="xc4" viewBox="0 0 26 26"><path d="M1 2l7 7M8 2L1 9" stroke="#e04040"/><rect x="7" y="9" width="17" height="16" fill="#f3ecd4"/><path d="M7 25V9h17" fill="none" stroke="#a87838"/><text x="11" y="22" font-size="12" fill="#c58238" font-family="Liberation Serif">A</text></symbol>
<symbol id="brb" viewBox="0 0 26 26"><rect x="1" y="13" width="10" height="12" fill="#dde8f4" stroke="#3f8ad0"/><rect x="14" y="6" width="10" height="19" fill="#dde8f4" stroke="#3f8ad0"/><path d="M5 2v10" stroke="#3f8ad0" stroke-dasharray="2 1.500"/><path d="M8 2h16" stroke="#c58238" stroke-width="2"/></symbol>
<symbol id="ovl" viewBox="0 0 26 26"><rect x="1" y="12" width="9" height="13" fill="#b8d8d0" stroke="#666"/><rect x="16" y="12" width="9" height="13" fill="#b8d8d0" stroke="#666"/><rect x="1" y="12" width="24" height="4" fill="#b8d8d0" stroke="#666"/><circle cx="13" cy="11" r="6" fill="#fff" fill-opacity=".5" stroke="#555" stroke-width="1.300"/><path d="M1 2h8M16 2h8" stroke="#c58238"/></symbol>
<symbol id="cys" viewBox="0 0 26 26"><g fill="#fff" stroke="#3f8ad0" stroke-width="1.300"><rect x="1" y="2" width="11" height="23" rx="5.500"/><rect x="14" y="2" width="11" height="23" rx="5.500"/><ellipse cx="6.500" cy="7" rx="5.500" ry="3" fill="#c9dcee"/><ellipse cx="19.500" cy="7" rx="5.500" ry="3" fill="#c9dcee"/></g></symbol>
<symbol id="pnc" viewBox="0 0 26 26"><path d="M3 25V2h10q8 0 8 7t-8 7H9v9z" fill="#f4e040" stroke="#2d3fd0" stroke-width="2"/><text x="13" y="26" font-size="8" fill="#d83838">NC</text></symbol>
<symbol id="dch" viewBox="0 0 26 26"><rect x="3" y="8" width="18" height="16" fill="#eee" stroke="#999"/><path d="M8 9l7-7 5 3-7 8z" fill="#e6b690" stroke="#a87848"/><path d="M6 14h6M6 18h6" stroke="#999"/><rect x="20" y="20" width="5" height="5" fill="#3a4a70"/></symbol>
<symbol id="eto" viewBox="0 0 26 26"><rect x="3" y="1" width="12" height="13" fill="#f4e040" stroke="#8a7a20"/><text x="6" y="11" font-size="9" fill="#333">E</text><path d="M6 14v7h4" stroke="#d83838" fill="none"/><rect x="10" y="17" width="15" height="7" fill="#fff" stroke="#d83838"/><text x="12" y="23.500" font-size="6" fill="#2d3fd0">TO</text></symbol>
<symbol id="rdl" viewBox="0 0 26 26"><rect x="3" y="1" width="4" height="14" fill="#2d3fd0"/><path d="M4 15v5h5" fill="none" stroke="#d83838" stroke-width="2"/><path d="M8 17l4 3-4 3z" fill="#d83838"/><rect x="13" y="7" width="12" height="17" fill="#fff" stroke="#2d3fd0" stroke-width="1.300"/><path d="M15 11h8M15 15h8M15 19h8" stroke="#2d3fd0"/></symbol>
<symbol id="gbx" viewBox="0 0 26 26"><path d="M2 13l6-5h16v11l-6 6H2z" fill="#2fa84f" stroke="#333"/><path d="M2 13h16v12M18 13l6-5" stroke="#333" fill="none"/><rect x="9" y="1" width="13" height="5" fill="#f4d840" stroke="#333"/><rect x="14" y="6" width="3" height="6" fill="#f4d840" stroke="#333"/></symbol>
<symbol id="yar" viewBox="0 0 26 26"><path d="M2 2v22M5 2v22" stroke="#5a5ac8"/><path d="M9 8h6V5l6 7-6 7v-3H9z" fill="#f4d840" stroke="#d83838"/><path d="M20 2q5 5 1 10t1 12" fill="none" stroke="#5a5ac8"/></symbol>
<symbol id="bear" viewBox="0 0 26 26"><path d="M2 2l6 2h10l6-2 1 9-2 10-6 4H9l-6-4-2-10z" fill="#8a8a8a" stroke="#555"/><circle cx="8.500" cy="11" r="3" fill="#ddd"/><circle cx="17.500" cy="11" r="3" fill="#ddd"/><circle cx="8.500" cy="11" r="1.200" fill="#222"/><circle cx="17.500" cy="11" r="1.200" fill="#222"/><path d="M9 19q4 3 8 0M13 15v3" stroke="#222" fill="none"/><path d="M11 15h4l-2 2z" fill="#222"/></symbol>
<symbol id="ytr" viewBox="0 0 26 26"><path d="M6 2h14v12H6z" fill="#e8d060" stroke="#a89a40"/><text x="10" y="11" font-size="9" fill="#3a7a4a">S</text><path d="M3 10v13" stroke="#3a7a4a"/><rect x="3" y="14" width="20" height="4" fill="#a8d8b8" stroke="#3a7a4a"/><rect x="3" y="20" width="20" height="4" fill="#a8d8b8" stroke="#3a7a4a"/></symbol>
<symbol id="t12" viewBox="0 0 26 26"><rect x="8" y="1" width="16" height="7" fill="#fff" stroke="#333"/><text x="14" y="7.500" font-size="7" fill="#d83838">12</text><rect x="1" y="1" width="5" height="18" fill="#333"/><rect x="2" y="9" width="3" height="8" fill="#2d3fd0"/><path d="M15 8v15M15 13h4M15 18h4M15 23h4" stroke="#333"/><g fill="#fff" stroke="#333"><rect x="19" y="11" width="4" height="4"/><rect x="19" y="16" width="4" height="4"/><rect x="19" y="21" width="4" height="4"/></g></symbol>
<symbol id="bt" viewBox="0 0 26 26"><rect x="3" y="0" width="4" height="14" fill="#2d3fd0"/><path d="M4 14q-1 8 6 6" fill="none" stroke="#d83838" stroke-width="1.500"/><rect x="10" y="8" width="4" height="14" fill="#2d3fd0"/><path d="M17 8v13M17 11h3M17 16h3M17 21h3" stroke="#333"/><g fill="#fff" stroke="#333"><rect x="20" y="9" width="4" height="3"/><rect x="20" y="14" width="4" height="3"/><rect x="20" y="19" width="4" height="3"/></g></symbol>
<symbol id="arw" viewBox="0 0 26 26"><path d="M3 8l5 13M11 22l5-8M20 3v18" stroke="#2d3fd0"/><path d="M0 11l3-6 3 5zM8 25l-2-6 5 3z" fill="#2d3fd0"/><path d="M14 12V4" stroke="#d83838"/><path d="M11 7l3-6 3 6zM17 18l3 6 3-6z" fill="#d83838"/><path d="M20 4v14" stroke="#d83838"/></symbol>
<symbol id="trl" viewBox="0 0 26 26"><path d="M3 2v16" stroke="#333"/><rect x="1" y="1" width="5" height="4" fill="#fff" stroke="#333"/><rect x="1" y="8" width="5" height="4" fill="#fff" stroke="#333"/><path d="M3 14v6h5" fill="none" stroke="#d83838" stroke-width="2"/><rect x="12" y="7" width="13" height="17" fill="#fff" stroke="#2d3fd0" stroke-width="1.300"/><path d="M14 11h9M14 15h9M14 19h9" stroke="#2d3fd0"/></symbol>
<symbol id="ycn" viewBox="0 0 26 26"><path d="M1 1h24v6H13q-6 0-6 8v10H1z" fill="#f4f040"/><path d="M7 25V15q0-7 6-8h12" fill="none" stroke="#222"/><g fill="#d83838"><circle cx="13" cy="12" r="1"/><circle cx="16" cy="16" r="1"/><circle cx="20" cy="21" r="1"/></g></symbol>
<symbol id="ptn" viewBox="0 0 26 26"><path d="M3 25V2h12q9 0 9 9t-9 9h-4v5z" fill="#c8935a"/><path d="M11 8h4q3 0 3 3t-3 3h-4z" fill="#fff"/></symbol>
<symbol id="yy1" viewBox="0 0 26 26"><rect x="1" y="1" width="24" height="24" fill="#dcbc7c"/><path d="M1 1l12 12 12-12M13 13v12" stroke="#fff" stroke-width="2" fill="none"/></symbol>
<symbol id="yy2" viewBox="0 0 26 26"><use href="#yy1"/><rect x="18" y="17" width="6" height="7" fill="#bcd4ec" stroke="#3f8ad0"/></symbol>
<symbol id="yy3" viewBox="0 0 26 26"><use href="#yy1"/><rect x="18" y="11" width="6" height="6" fill="#bcd4ec" stroke="#3f8ad0"/><rect x="18" y="18" width="6" height="6" fill="#bcd4ec" stroke="#3f8ad0"/></symbol>
<symbol id="flo" viewBox="0 0 26 26"><path d="M13 1q3 0 4 2 3-1 4 2t2 4q2 2 2 4t-2 4q0 3-2 4t-4 2q-1 2-4 2t-4-2q-3 0-4-2t-2-4q-2-2-2-4t2-4q0-3 2-4t4-2q1-2 4-2z" fill="#e8bc60" stroke="#c08a30"/><ellipse cx="13" cy="13" rx="7" ry="8" fill="#a8d0f0" stroke="#3f8ad0"/></symbol>
<symbol id="oin" viewBox="0 0 26 26"><ellipse cx="13" cy="13" rx="12" ry="12" fill="#d4e4f4" stroke="#5a9ad8" stroke-width="1.300"/><rect x="11.500" y="5" width="3" height="11" fill="#d08030"/><rect x="11.500" y="18" width="3" height="3" fill="#d08030"/></symbol>
<symbol id="sax" viewBox="0 0 26 26"><path d="M13 13L3 22M13 13l11 7M13 13V2" stroke="#e0b0a0"/><rect x="9" y="9" width="8" height="8" fill="#e8a040" stroke="#8a5a20"/></symbol>
<symbol id="trf" viewBox="0 0 26 26"><path d="M4 2h5v10H4zM11 2h5v10h-5z" fill="#7a90e0" stroke="#3a50a0"/><path d="M11 15l5-3h8v8l-5 4h-8z" fill="#a8c8f4" stroke="#5a7ac0"/><path d="M3 14q0 6 6 6" fill="none" stroke="#e08030" stroke-width="1.500"/></symbol>
<symbol id="til" viewBox="0 0 26 26"><path d="M13 2l11 11-11 11L2 13z" fill="#3d6a58" stroke="#888"/><g fill="#d83838"><rect x="10" y="1" width="5" height="5"/><rect x="1" y="10" width="5" height="5"/><rect x="20" y="10" width="5" height="5"/><rect x="10" y="20" width="5" height="5"/></g></symbol>
<symbol id="ggd" viewBox="0 0 26 26"><rect x="2" y="2" width="22" height="22" fill="#fff" stroke="#e0c8c8"/><path d="M10 2v22M18 2v22M2 10h8M2 18h8" stroke="#e0c8c8"/><rect x="12" y="5" width="4" height="16" fill="#c8e0c8"/></symbol>
<symbol id="rxc" viewBox="0 0 26 26"><circle cx="13" cy="13" r="10" fill="none" stroke="#aaa"/><path d="M13 3v20M3 5l20 0M5 24L21 4M5 4l16 20" stroke="#d83838" stroke-width="1.300"/></symbol>
<symbol id="xtl" viewBox="0 0 26 26"><rect width="26" height="26" fill="#c8c8c8"/><path d="M3 3h20l-3 10 3 10H3l3-10z" fill="#3aa0e0" stroke="#333"/><path d="M6 6l14 14M20 6L6 20" stroke="#e03030" stroke-width="2"/></symbol>
<symbol id="hex" viewBox="0 0 26 26"><path d="M13 1l11 6v12l-11 6-11-6V7z" fill="#8a9a9a" stroke="#555"/><path d="M13 6l7 4v8l-7 4-7-4v-8z" fill="#6aa870"/><rect x="9" y="8" width="8" height="10" fill="#a08030"/></symbol>
<symbol id="oxg" viewBox="0 0 26 26"><path d="M3 6l10-4 10 4v15l-10 4-10-4z" fill="#9ab09a" stroke="#666"/><rect x="9" y="5" width="8" height="18" fill="#f0a030" stroke="#d83838"/></symbol>
<symbol id="adt" viewBox="0 0 26 26"><path d="M3 6l10-4 10 4v15l-10 4-10-4z" fill="#8aa89a" stroke="#666"/><circle cx="16" cy="8" r="3" fill="#d83838"/><circle cx="16" cy="18" r="3" fill="#d83838"/><path d="M8 25V12H4l6-9 6 9h-3v13z" fill="none" stroke="#222" stroke-width="1.300"/></symbol>
<symbol id="pdc" viewBox="0 0 26 26"><path d="M3 1h14l6 6v18H3z" fill="#e8eef4" stroke="#bcc8d4"/><path d="M8 21l12-14 3 3-12 13-4 1z" fill="#5ab0e8"/></symbol>
<symbol id="scr" viewBox="0 0 26 26"><rect width="26" height="26" fill="#eee"/><path d="M4 2h18v20q0 2-2 2H2v-2h2z" fill="#f6f4e8" stroke="#333"/><rect x="11" y="4" width="3" height="13" fill="#2d3fd0"/><path d="M7 8h12M7 12h12M7 16h12M7 20h12" stroke="#333"/></symbol>
<symbol id="bgi" viewBox="0 0 26 26"><rect x="1" y="1" width="24" height="24" rx="2" fill="#5a7ac0" stroke="#999"/><rect x="10" y="9" width="6" height="12" fill="#fff"/><rect x="10" y="4" width="6" height="4" fill="#fff"/></symbol>
<symbol id="mch" viewBox="0 0 26 26"><rect width="26" height="26" fill="#c8c8c8"/><rect x="9" y="2" width="3" height="8" fill="#444"/><rect x="15" y="2" width="3" height="8" fill="#444"/><rect x="4" y="10" width="18" height="10" fill="#6a7ae0"/><path d="M6 13h14M6 16h14" stroke="#fff"/></symbol>
<symbol id="grt" viewBox="0 0 26 26"><path d="M2 4l20-2 2 20-20 2z" fill="#9ab89a" stroke="#777"/><path d="M8 8h10v8H8z" fill="none" stroke="#e03030" stroke-width="1.500"/><g fill="#fff" stroke="#555"><circle cx="8" cy="8" r="2"/><circle cx="18" cy="8" r="2"/><circle cx="8" cy="16" r="2"/><circle cx="18" cy="16" r="2"/></g></symbol>
<symbol id="glt" viewBox="0 0 26 26"><path d="M2 4l20-2 2 20-20 2z" fill="#fff" stroke="#50b060"/><path d="M8 8h10v8H8z" fill="none" stroke="#e03030" stroke-width="1.500"/><g fill="#fff" stroke="#50b060"><circle cx="7" cy="7" r="3"/><circle cx="19" cy="7" r="3"/><circle cx="7" cy="19" r="3"/><circle cx="19" cy="19" r="3"/></g></symbol>
<symbol id="dsh" viewBox="0 0 26 26"><rect x="14" y="0" width="3" height="12" fill="#b88a70"/><ellipse cx="13" cy="17" rx="12" ry="8" fill="#8a8a8a"/><ellipse cx="13" cy="16" rx="8" ry="5" fill="#c8d0d8" stroke="#7a5ab0" stroke-width="1.500"/></symbol>
<symbol id="ach" viewBox="0 0 26 26"><path d="M1 24V12Q1 2 12 2h8l5 6v16z" fill="#f4c860" stroke="#c03030"/><path d="M8 24V12Q8 5 16 4" fill="#e8a8d8" stroke="#a05ab0"/><path d="M18 25l4-9 4 9z" fill="#fff" stroke="#333"/></symbol>
<symbol id="abx" viewBox="0 0 26 26"><rect x="1" y="1" width="24" height="24" fill="#fff" stroke="#444" stroke-width="1.600"/><text x="5" y="21" font-size="20" font-family="Liberation Serif" fill="#333">A</text></symbol>
<symbol id="sld" viewBox="0 0 26 26"><rect x="6" y="0" width="5" height="6" fill="#c08a60"/><path d="M3 7l6-2 15 3v16l-14 2-7-4z" fill="#9ab8a8" stroke="#8aa898"/><path d="M9 5v21" stroke="#c08a60" stroke-width="2"/></symbol>
<symbol id="flt" viewBox="0 0 26 26"><rect x="2" y="2" width="22" height="22" fill="#fff" stroke="#b02020" stroke-width="1.600"/><path d="M12 5v8M8 9h8" stroke="#333"/><path d="M11 15h11l-4 4v4h-3v-4z" fill="#e8a020"/></symbol>
<symbol id="hx2" viewBox="0 0 26 26"><path d="M7 3h12l6 10-6 10H7L1 13z" fill="#fff" stroke="#333" stroke-width="1.500"/><circle cx="13" cy="13" r="1.800" fill="#c82020"/></symbol>
<symbol id="dc2" viewBox="0 0 26 26"><circle cx="10" cy="10" r="8" fill="none" stroke="#333" stroke-dasharray="1.500 1.500"/><circle cx="17" cy="18" r="5" fill="none" stroke="#d02020" stroke-width="1.500"/><path d="M17 11v14M10 18h14" stroke="#d02020"/></symbol>
<symbol id="ds2" viewBox="0 0 26 26"><rect x="4" y="4" width="18" height="18" fill="none" stroke="#333" stroke-dasharray="2 2"/><g fill="#c82020"><rect x="2" y="2" width="4" height="4"/><rect x="20" y="20" width="4" height="4"/></g></symbol>
<symbol id="nv1" viewBox="0 0 26 26"><rect x="2" y="2" width="11" height="13" fill="#e4e8f8" stroke="#3a4a90"/><path d="M4 5h2M7 5h2M10 5h2M4 8h2M7 8h2M10 8h2M4 11h2M7 11h2" stroke="#3a4a90"/><rect x="8" y="6" width="8" height="14" fill="#b8c8f0" stroke="#3a4a90"/><path d="M19 8v16M19 12h2M19 17h2M19 22h2" stroke="#2d3fd0"/><g fill="#f4e040" stroke="#2d3fd0"><rect x="21" y="10" width="4" height="4"/><rect x="21" y="15" width="4" height="4"/><rect x="21" y="20" width="4" height="4"/></g></symbol>
<symbol id="nv2" viewBox="0 0 26 26"><path d="M5 10l5-2v12l-5 5z" fill="#5f73bd"/><rect x="10" y="2" width="6" height="15" fill="#777"/><rect x="7" y="8" width="6" height="6" fill="#f0c040" stroke="#c03030"/><path d="M19 9v15M19 13h2M19 18h2M19 23h2" stroke="#2d3fd0"/><g fill="#fff" stroke="#2d3fd0"><rect x="21" y="11" width="4" height="4"/><rect x="21" y="16" width="4" height="4"/><rect x="21" y="21" width="4" height="4"/></g></symbol>
<symbol id="nv3" viewBox="0 0 26 26"><path d="M2 8l9-5 7 3v11l-8 4-8-3z" fill="#8fa5e8" stroke="#5a6ab8"/><circle cx="7" cy="14" r="4" fill="#f4dc40" stroke="#d83838" stroke-width="1.500"/><path d="M20 9v15M20 13h2M20 18h2M20 23h2" stroke="#2d3fd0"/><g fill="#fff" stroke="#2d3fd0"><rect x="21" y="11" width="4" height="4"/><rect x="21" y="16" width="4" height="4"/><rect x="21" y="21" width="4" height="4"/></g></symbol>
<symbol id="nv4" viewBox="0 0 26 26"><path d="M2 4l4 3 5-3 5 3 4-3v6H2z" fill="#fff" stroke="#2d4f9c"/><rect x="2" y="11" width="16" height="8" fill="#dde4f8" stroke="#2d4f9c"/><path d="M5 11v3M9 11v3M13 11v3M2 20h16" stroke="#2d4f9c"/><path d="M20 9v15M20 13h2M20 18h2M20 23h2" stroke="#2d3fd0"/><g fill="#fff" stroke="#2d3fd0"><rect x="21" y="11" width="4" height="4"/><rect x="21" y="16" width="4" height="4"/><rect x="21" y="21" width="4" height="4"/></g></symbol>
<symbol id="nv6" viewBox="0 0 26 26"><use href="#dr"/><path d="M14 4h10M14 8h8" stroke="#555"/><rect x="10" y="13" width="15" height="11" rx="1" fill="#a8c8e8" stroke="#333"/><use href="#star" transform="translate(0 14) scale(.7)"/></symbol>
<symbol id="nv7" viewBox="0 0 26 26"><rect x="5" y="1" width="6" height="20" fill="#aaa"/><path d="M12 13h8v-4l5 6-5 6v-4h-8z" fill="#bbb"/><use href="#star" transform="translate(2 15) scale(.7)"/></symbol>
<symbol id="cn1" viewBox="0 0 26 26"><path d="M1 3l6 5-6 5z" fill="#ccc"/><path d="M6 9h4l8 4h7v6h-7l-8 4H6z" fill="#fff" stroke="#aaa" stroke-width="1.500"/><path d="M14 20l6 3-6 3z" fill="#ccc"/></symbol>
<symbol id="cn2" viewBox="0 0 26 26"><path d="M1 3l6 5-6 5z" fill="#aaa"/><path d="M6 8h4l8 5h7v6h-7l-8 5H6z" fill="#bbb" stroke="#888" stroke-width="1.500"/><path d="M14 20l6 3-6 3z" fill="#bbb"/></symbol>
<symbol id="cn3" viewBox="0 0 26 26"><path d="M3 6h4v4l8 2h8v4h-8l-8 2v4H3z" fill="#d8d8d8" stroke="#ccc"/></symbol>
<symbol id="rs1" viewBox="0 0 26 26"><path d="M3 2l3-2h5v6l-3 2H3zM3 10l3-2h5v6l-3 2H3z" fill="#f4d880" stroke="#c8a850"/><path d="M14 12h8M7 16v9M7 20h6" stroke="#2d3fa0"/><path d="M14 18l3-2h5v6l-3 2h-5z" fill="#f4d840" stroke="#c8a850"/></symbol>
<symbol id="rs2" viewBox="0 0 26 26"><path d="M3 2l9 7-9 6zM24 2l-9 7 9 6z" fill="#1e46c8"/><rect x="1" y="16" width="10" height="9" fill="#f4ee60" stroke="#333"/><path d="M14 25V14l10 11z" fill="#b81818"/></symbol>
<symbol id="rs3" viewBox="0 0 26 26"><path d="M3 3q5-3 9 0v10q-4 3-9 0z" fill="#e8c8e0" stroke="#8a2a80" stroke-width="1.300"/><path d="M15 9h8M10 15v8M10 19h4" stroke="#333"/><circle cx="18" cy="19" r="4" fill="#fff" stroke="#8a2a80" stroke-width="1.300"/><circle cx="18" cy="19" r="1.500" fill="#8a2a80"/></symbol>
<symbol id="rs4" viewBox="0 0 26 26"><rect x="4" y="1" width="4" height="14" fill="#3a80d8"/><path d="M10 4h5M10 7h4M17 10h7" stroke="#3a80d8"/><path d="M7 15v8M7 19h6" stroke="#2d3fa0"/><path d="M14 15h4v4h4v4h-8z" fill="#fff" stroke="#3a80d8"/></symbol>
<symbol id="rs5" viewBox="0 0 26 26"><path d="M2 12l15-9 7 2v10L6 24z" fill="#f8e0c0" stroke="#9a70c0"/><path d="M8 9l6 12M14 6l6 12M4 15l16-8M6 19l16-8" stroke="#e8a040"/><path d="M10 18l8-4 7 2v6l-8 3z" fill="#2fa0e0" stroke="#1e6aa0"/></symbol>
<symbol id="rs6" viewBox="0 0 26 26"><path d="M2 9l4-2v17H2zM9 7h6l6 6v11H9z" fill="#fff" stroke="#555"/><path d="M13 6l3-4 4 3-2 3z" fill="#e87030"/><rect x="18" y="1" width="6" height="6" fill="#f4a030" stroke="#c03030"/></symbol>
<symbol id="rs7" viewBox="0 0 26 26"><rect x="2" y="7" width="6" height="17" fill="#30a060"/><rect x="8" y="4" width="6" height="20" fill="#f0b030"/><rect x="14" y="2" width="6" height="22" fill="#3080d0"/><rect x="20" y="6" width="4" height="18" fill="#e8c850"/></symbol>
<symbol id="rs8" viewBox="0 0 26 26"><path d="M3 11a10 9 0 0 1 20 0M7 12a6 6 0 0 1 12 0" fill="none" stroke="#2a70c0" stroke-width="2"/><rect x="11" y="11" width="4" height="10" fill="#2a70c0"/></symbol>
<symbol id="rs9" viewBox="0 0 26 26"><rect x="5" y="2" width="16" height="22" rx="1" fill="#fff" stroke="#2a8a9a" stroke-width="1.300"/><circle cx="13" cy="14" r="5" fill="#2a9ac0"/><path d="M10 14h6" stroke="#fff" stroke-width="2"/></symbol>
<symbol id="rsa" viewBox="0 0 26 26"><circle cx="13" cy="13" r="10" fill="#fff" stroke="#444" stroke-width="1.600"/><path d="M13 6v7l5 3" fill="none" stroke="#444" stroke-width="1.500"/><rect x="8" y="22" width="10" height="3" fill="#999"/></symbol>
<symbol id="rsb" viewBox="0 0 26 26"><rect x="3" y="1" width="8" height="24" fill="url(#rg)"/><path d="M14 6l9 18" stroke="#333" stroke-width="2.500"/></symbol>
<symbol id="rsc" viewBox="0 0 26 26"><path d="M4 6l5 14 5-2 3 5 5-2-5-6-4-9z" fill="#3a80c8" stroke="#1e4a80"/><path d="M18 6l4-3 2 6-6 6z" fill="#e8a040"/><circle cx="7" cy="22" r="2" fill="#30a060"/></symbol>
<symbol id="rsd" viewBox="0 0 26 26"><path d="M7 23l5-9q-2-6 5-9l-1 5 3 1 3-4q1 8-6 9l-5 8z" fill="#ddd" stroke="#666"/><circle cx="6" cy="8" r="4" fill="#bbb" stroke="#666"/></symbol>
<symbol id="win" viewBox="0 0 26 26"><path d="M4 6l8-1v7.500H4zM13 4.800L22 4v8.500h-9zM4 13.500h8V21l-8-1zM13 13.500h9V22l-9-1z" fill="#fff"/></symbol>
<symbol id="flm" viewBox="0 0 26 26"><rect x="1" y="1" width="24" height="24" fill="#1e8ee8"/><path d="M5 3h5v5H5zM5 11h5v5H5zM5 19h5v4H5zM13 10h10v6H13zM13 18h10v5H13z" fill="#fff"/><path d="M16 1h9v8z" fill="#f4b840"/></symbol>
<symbol id="pin" viewBox="0 0 26 26"><circle cx="13" cy="13" r="12" fill="#f4c830"/><path d="M13 1a12 12 0 0 1 12 12h-12z" fill="#e84840"/><path d="M13 1A12 12 0 0 0 2 8l11 5z" fill="#b060d8"/><path d="M2 8a12 12 0 0 0 4 15l7-10z" fill="#30a8e8"/><path d="M6 23a12 12 0 0 0 8 2l-1-12z" fill="#50c050"/><circle cx="13" cy="13" r="4" fill="#fff"/></symbol>
<symbol id="vmw" viewBox="0 0 26 26"><rect x="9" y="1" width="16" height="16" rx="2" fill="none" stroke="#1e90c8" stroke-width="3.500"/><rect x="1" y="9" width="16" height="16" rx="2" fill="none" stroke="#f08a10" stroke-width="3.500"/></symbol>
<symbol id="tab" viewBox="0 0 26 26"><rect x="1" y="1" width="24" height="24" rx="2" fill="#e8f0f8"/><rect x="3" y="3" width="20" height="17" fill="#3090d8"/><path d="M13 7v10M8 12h10" stroke="#fff"/><circle cx="17" cy="13" r="2" fill="#f0a030"/></symbol>
<symbol id="ydr" viewBox="0 0 26 26"><rect x="2" y="1" width="8" height="24" fill="#f4ee20" stroke="#333"/><path d="M2 6l8-4M2 12l8-4M2 18l8-4M2 24l8-4" stroke="#333"/><path d="M13 8v12h6" fill="none" stroke="#1818e0" stroke-width="1.500"/><text x="15" y="26" font-size="9" fill="#1818e0">W</text></symbol>
<symbol id="moo" viewBox="0 0 26 26"><circle cx="10" cy="15" r="9" fill="#c8c8d0"/><path d="M3 9h13M5 6l4 5" stroke="#333"/><rect x="15" y="1" width="8" height="24" fill="#e8d830" stroke="#333"/><path d="M15 7l8-4M15 13l8-4M15 19l8-4" stroke="#333"/></symbol>
<symbol id="fdr" viewBox="0 0 26 26"><path d="M2 4h9l2 3h11v17H2z" fill="#f8d870"/><path d="M2 8h22v3H2z" fill="#fff3c0"/><path d="M9 16h8v8H9z" fill="#2ea8e8"/><rect x="11" y="20" width="4" height="4" fill="#f8d870"/></symbol>
<symbol id="nfd" viewBox="0 0 16 16"><path d="M1 4h5l1 2h6v8H1z" fill="#e8a018" stroke="#7a4a08" stroke-width=".7"/><path d="M3 7h12l-2 7H1z" fill="#ffd23c" stroke="#7a4a08" stroke-width=".7"/></symbol>
<symbol id="nfl" viewBox="0 0 16 16"><use href="#nfd"/><path d="M9 1h6M9 3.500h5" stroke="#2a2a90"/></symbol>
<symbol id="mvw" viewBox="0 0 16 16"><path d="M8 1l6 3v7l-6 4-6-4V4z" fill="#fff" stroke="#1e9a6a" stroke-width="1.200"/><path d="M2 4l6 3 6-3M8 7v8M2 11l12-7M14 11L2 4" fill="none" stroke="#1e9a6a" stroke-width=".7"/><path d="M8 15l6-3" stroke="#e03a20" stroke-width="1.500"/></symbol>
<symbol id="cmr" viewBox="0 0 16 16"><path d="M1 5l11-3 3 1-1 11-11 1z" fill="#fff3ee" stroke="#d8301c" stroke-width="1.200"/><circle cx="7" cy="7" r="3" fill="none" stroke="#2a3fb0" stroke-width="1.300"/><circle cx="11" cy="8" r="2.500" fill="none" stroke="#222"/><path d="M11 11v3" stroke="#222"/></symbol>
<symbol id="obx" viewBox="0 0 16 16"><path d="M3 10l5-2v-4l5 1 2 2v3l-3 5H6l-3-2z" fill="#3a78d8" stroke="#1e3a90" stroke-width=".6"/><path d="M8 4h6M7 9h6" stroke="#cfe0fa"/><circle cx="5" cy="4" r="3.500" fill="#fff" stroke="#d81c2a" stroke-width="1.500"/><path d="M2.500 6.500l5-5" stroke="#d81c2a" stroke-width="1.300"/><path d="M10 1h5M12 1v3" stroke="#222"/></symbol>
<path id="ck" d="M1 7l3-2 2 3 6-7 2 1-8 12z" fill="#19b83a"/>
</defs></svg>

<div class="title">
  <span class="logo">NX</span><span class="ttext">NX 12.0.0.27 - 加工</span>
  <span class="siemens">SIEMENS</span>
  <span class="winbtns" aria-hidden="true"><i class="wmin"></i><i class="wres"></i><svg class="wcl" viewBox="0 0 12 12"><path d="M1 1l10 10M11 1L1 11" stroke="#333" stroke-width="1.300"/></svg></span>
</div>
<nav class="menu">
  <i class="gripw"></i>
  <span>文件(<u>F</u>)</span><span>编辑(<u>E</u>)</span><span>视图(<u>V</u>)</span><span>插入(<u>S</u>)</span><span>格式(<u>R</u>)</span><span>工具(<u>T</u>)</span><span>装配(<u>A</u>)</span><span>信息(<u>I</u>)</span><span>分析(<u>L</u>)</span><span class="far">首选项(<u>P</u>)</span><span>浩强工具v2.59</span><span>窗口(<u>O</u>)</span><span>GC工具箱</span><span>燕秀UG模具6.32</span><span>DZ工具v1.92</span><span>帮助(<u>H</u>)</span><span>燕秀PM编程4.6</span>
</nav>

<div class="tb"><i class="grip"></i>
<svg class="i"><use href="#globe"/></svg><span class="lbl w26">启动</span><b class="c n"></b>
<svg class="i"><use href="#doc"/></svg><svg class="i"><use href="#open"/></svg><svg class="i"><use href="#save"/></svg><i class="sep"></i>
<svg class="i"><use href="#cut"/></svg><svg class="i"><use href="#copy"/></svg><svg class="i"><use href="#paste"/></svg><svg class="i"><use href="#xd"/></svg><i class="sep"></i>
<svg class="i"><use href="#undo"/></svg><b class="c"></b><i class="sep"></i><svg class="i"><use href="#blk"/></svg><b class="c"></b><i class="sep"></i><svg class="i"><use href="#wbox"/></svg><b class="c"></b><i class="sep"></i><svg class="i"><use href="#info"/></svg><i class="sp38"></i><span class="ovf">»<b class="c n"></b></span><i class="sg"></i>
<svg class="i"><use href="#fit"/></svg><b class="c"></b><svg class="i"><use href="#lap"/></svg><b class="c"></b><svg class="i"><use href="#cube"/></svg><b class="c"></b><svg class="i"><use href="#tan"/></svg><svg class="i"><use href="#slant"/></svg><b class="c"></b><svg class="i"><use href="#hdr"/></svg><b class="c"></b><i class="sep"></i>
<svg class="i"><use href="#mv1"/></svg><svg class="i"><use href="#mv2"/></svg><b class="c"></b><i class="sg"></i>
<span class="num">3<b class="c n"></b></span><svg class="i"><use href="#lay"/></svg><svg class="i"><use href="#pts"/></svg><b class="c"></b><i class="sep"></i><svg class="i"><use href="#hand"/></svg><svg class="i"><use href="#palb"/></svg><i class="sep"></i>
<svg class="i"><use href="#d1"/></svg><b class="c"></b><svg class="i"><use href="#d2"/></svg><svg class="i"><use href="#d3"/></svg><i class="sep"></i><svg class="i"><use href="#ant"/></svg><b class="c"></b><svg class="i"><use href="#rul"/></svg><b class="c"></b><i class="sg"></i>
<svg class="i"><use href="#heat"/></svg><b class="c"></b><svg class="i"><use href="#ring"/></svg><svg class="i"><use href="#plus"/></svg><b class="c"></b><svg class="i"><use href="#lift"/></svg><b class="c"></b><svg class="i"><use href="#cyl"/></svg><svg class="i"><use href="#bbx"/></svg><svg class="i"><use href="#wcube"/></svg><b class="c"></b><b class="c n8"></b><i class="sg12"></i>
<svg class="i"><use href="#bolt"/></svg><svg class="i"><use href="#house"/></svg><svg class="i"><use href="#lamp"/></svg><svg class="i"><use href="#flw"/></svg><svg class="i"><use href="#fit2"/></svg><svg class="i"><use href="#lst"/></svg><b class="c"></b><i class="sg"></i>
<svg class="i"><use href="#vchk"/></svg><svg class="i"><use href="#tre2"/></svg><svg class="i"><use href="#tbl"/></svg><svg class="i"><use href="#axg"/></svg><b class="c"></b>
</div>

<div class="tb"><i class="grip g7"></i>
<svg class="i"><use href="#a2a"/></svg><svg class="i"><use href="#a2b"/></svg><svg class="i"><use href="#a2c"/></svg><svg class="i"><use href="#a2d"/></svg><svg class="i"><use href="#drl"/></svg><b class="c"></b><i class="sg"></i>
<svg class="i off"><use href="#drl"/></svg><svg class="i off"><use href="#swr"/></svg><svg class="i off"><use href="#sx"/></svg><svg class="i off"><use href="#scv"/></svg><svg class="i off"><use href="#cktl"/></svg><svg class="i off"><use href="#sdoc"/></svg><svg class="i off"><use href="#ckw"/></svg><svg class="i off"><use href="#drdoc"/></svg><svg class="i off"><use href="#cktl"/></svg><span class="ovf m3">»<b class="c n"></b></span><i class="sg"></i>
<svg class="i"><use href="#dw"/></svg><svg class="i"><use href="#ds"/></svg><svg class="i off"><use href="#drdoc"/></svg><svg class="i off"><use href="#drdoc"/></svg><svg class="i off"><use href="#paste"/></svg><svg class="i"><use href="#pen"/></svg><svg class="i"><use href="#dx"/></svg><svg class="i off"><use href="#ga"/></svg><b class="c"></b><i class="sg"></i>
<svg class="i"><use href="#obox"/></svg><svg class="i"><use href="#rwr"/></svg><svg class="i"><use href="#cup"/></svg><svg class="i"><use href="#gxd"/></svg><svg class="i"><use href="#ii"/></svg><svg class="i"><use href="#gg"/></svg><svg class="i"><use href="#gp"/></svg><svg class="i"><use href="#xdim"/></svg><svg class="i"><use href="#cdot"/></svg><svg class="i"><use href="#bwr"/></svg><svg class="i"><use href="#rain"/></svg><svg class="i"><use href="#grng"/></svg><svg class="i"><use href="#ystp"/></svg><svg class="i"><use href="#arc"/></svg><svg class="i"><use href="#kg"/></svg><svg class="i"><use href="#hook"/></svg><svg class="i"><use href="#gcb"/></svg><svg class="i"><use href="#prt"/></svg><svg class="i"><use href="#tre"/></svg><svg class="i"><use href="#lay"/></svg><svg class="i"><use href="#sq"/></svg><svg class="i"><use href="#xyz"/></svg><svg class="i"><use href="#ycb"/></svg><svg class="i"><use href="#pipe"/></svg><svg class="i"><use href="#ybl"/></svg><svg class="i"><use href="#gb1"/></svg><svg class="i"><use href="#gb2"/></svg><svg class="i"><use href="#gb3"/></svg><svg class="i"><use href="#xyzt"/></svg><svg class="i"><use href="#chk3"/></svg><svg class="i"><use href="#rbox"/></svg><svg class="i"><use href="#pcb"/></svg><svg class="i"><use href="#tea"/></svg><svg class="i"><use href="#big"/></svg><svg class="i"><use href="#pal"/></svg><svg class="i"><use href="#gc"/></svg><svg class="i"><use href="#ltn"/></svg><b class="c"></b>
</div>

<div class="tb"><i class="grip g7"></i>
<svg class="i"><use href="#zi"/></svg><svg class="i"><use href="#dim"/></svg><svg class="i"><use href="#wbo"/></svg><svg class="i"><use href="#sbo"/></svg><svg class="i"><use href="#cgr"/></svg><svg class="i"><use href="#brs"/></svg><i class="sep"></i>
<svg class="i"><use href="#rcb"/></svg><svg class="i"><use href="#pbx"/></svg><svg class="i"><use href="#hbx"/></svg><i class="sep"></i>
<svg class="i"><use href="#rot"/></svg><svg class="i"><use href="#mvb"/></svg><svg class="i"><use href="#rlb"/></svg><svg class="i"><use href="#crs"/></svg><svg class="i"><use href="#axs"/></svg><svg class="i"><use href="#xls"/></svg><i class="sep"></i>
<svg class="i"><use href="#ra"/></svg><svg class="i"><use href="#hgr"/></svg><svg class="i"><use href="#cam"/></svg><i class="sep"></i>
<svg class="i"><use href="#gs"/></svg><svg class="i"><use href="#dnb"/></svg><svg class="i"><use href="#upb"/></svg><i class="sep"></i>
<svg class="i"><use href="#sv2"/></svg><svg class="i"><use href="#fd2"/></svg><b class="c"></b><i class="sg12"></i>
<svg class="i"><use href="#co1"/></svg><svg class="i"><use href="#co2"/></svg><i class="sep sep7"></i>
<svg class="i"><use href="#l1"/></svg><svg class="i"><use href="#l2"/></svg><svg class="i"><use href="#l3"/></svg><svg class="i"><use href="#l4"/></svg><i class="sep"></i>
<svg class="i"><use href="#xc1"/></svg><svg class="i"><use href="#xc2"/></svg><svg class="i"><use href="#xc3"/></svg><svg class="i"><use href="#xc4"/></svg><i class="sep"></i>
<svg class="i"><use href="#brb"/></svg><svg class="i"><use href="#ovl"/></svg><svg class="i"><use href="#cys"/></svg><i class="sp21"></i><span class="ovf">»<b class="c n"></b></span><i class="sg"></i>
<svg class="i"><use href="#pnc"/></svg><svg class="i"><use href="#dch"/></svg><svg class="i"><use href="#eto"/></svg><svg class="i"><use href="#rdl"/></svg><svg class="i"><use href="#gbx"/></svg><svg class="i"><use href="#yar"/></svg><svg class="i"><use href="#bear"/></svg><svg class="i"><use href="#ytr"/></svg><svg class="i"><use href="#dw"/></svg><svg class="i"><use href="#t12"/></svg><svg class="i"><use href="#bt"/></svg><svg class="i"><use href="#arw"/></svg><svg class="i"><use href="#trl"/></svg><svg class="i"><use href="#drl"/></svg><svg class="i"><use href="#ycn"/></svg><b class="c"></b><i class="sg"></i>
<svg class="i"><use href="#ptn"/></svg><svg class="i"><use href="#yy2"/></svg><svg class="i"><use href="#yy3"/></svg><svg class="i"><use href="#yy1"/></svg><svg class="i"><use href="#flo"/></svg><svg class="i"><use href="#oin"/></svg><b class="c"></b>
</div>

<div class="tb"><i class="grip g7"></i>
<svg class="i"><use href="#sax"/></svg><span class="lbl w51">变换工件</span>
<svg class="i"><use href="#trf"/></svg><svg class="i"><use href="#til"/></svg><svg class="i"><use href="#ggd"/></svg><svg class="i"><use href="#rxc"/></svg><svg class="i"><use href="#pcb"/></svg><svg class="i"><use href="#xtl"/></svg><svg class="i"><use href="#hex"/></svg><svg class="i"><use href="#oxg"/></svg><svg class="i"><use href="#adt"/></svg><svg class="i"><use href="#pdc"/></svg><svg class="i"><use href="#scr"/></svg><svg class="i"><use href="#wbox"/></svg><svg class="i"><use href="#bgi"/></svg><svg class="i"><use href="#mch"/></svg><svg class="i"><use href="#grt"/></svg><svg class="i"><use href="#glt"/></svg><svg class="i"><use href="#dsh"/></svg><svg class="i"><use href="#ach"/></svg><svg class="i"><use href="#abx"/></svg><svg class="i"><use href="#rwr"/></svg><svg class="i"><use href="#ycn"/></svg>
<div class="tbtext"><span>动态圆</span><span>动态刀具</span><span class="wsld">智能模板</span><svg class="i isld"><use href="#sld"/></svg><span>竖直棱边铣R角（铣刀）</span><span>智能等高倒角</span><span>层改色</span><span>打开所有图层</span><span>关闭主图层外图层</span><span>分割+偏置去倒角</span><span>自动加底</span><span>动态分析</span><span>特殊角插角</span><span>2D图移至绝对坐标系</span><span>参照底面偏置</span><span>批量添加预钻孔</span></div>
<span class="ovf end">»<b class="c n"></b></span>
</div>

<div class="sel">
  <span class="combo c1">无选择过滤器<b class="c n"></b></span>
  <span class="combo c2">整个装配<b class="c n"></b></span>
  <svg class="j off"><use href="#ggd"/></svg><i class="sep"></i>
  <svg class="j ml2 off"><use href="#drl"/></svg><svg class="j"><use href="#flt"/></svg><b class="c n10"></b><svg class="j ml2 off"><use href="#plus"/></svg><svg class="j off"><use href="#axg"/></svg><i class="sep"></i>
  <svg class="j"><use href="#hx2"/></svg><svg class="j"><use href="#dc2"/></svg><svg class="j ml2"><use href="#ds2"/></svg><b class="c n10"></b><i class="sep"></i>
  <svg class="j"><use href="#lap"/></svg><svg class="j"><use href="#cube"/></svg>
  <b class="c n end"></b>
</div>

<main class="work">
  <section class="vcol">
    <div class="tabbar"><span class="tab"><svg class="tic"><use href="#drl"/></svg>182EF.prt<span class="tx">✕</span></span></div>
    <div class="view">
      <svg class="canvas" viewBox="2 245 1220 773" aria-label="模型视图">
        <defs>
          <g id="holes" fill="none" stroke="#474747" stroke-width="1">
            <rect x="374" y="264" width="36" height="18" rx="9"/><rect x="814" y="264" width="36" height="18" rx="9"/>
            <path d="M169 402a22.500 22.500 0 1 1 24 0z"/><path d="M1031 402a22.500 22.500 0 1 1 24 0z"/>
            <rect x="469" y="354" width="10" height="21" rx="5"/><rect x="510" y="351" width="13" height="27" rx="6.500"/><rect x="593" y="359" width="27" height="13" rx="6.500"/><rect x="651" y="351" width="13" height="27" rx="6.500"/><rect x="743" y="351" width="13" height="27" rx="6.500"/><rect x="819" y="360" width="26" height="12" rx="6"/>
            <rect x="384" y="398" width="10" height="21" rx="5"/><rect x="489" y="393" width="21" height="10" rx="5"/><rect x="485" y="413" width="21" height="10" rx="5"/><rect x="611" y="416" width="10" height="21" rx="5"/><rect x="780" y="401" width="10" height="21" rx="5"/><rect x="704" y="423" width="10" height="21" rx="5"/><rect x="824" y="433" width="10" height="21" rx="5"/>
            <rect x="381" y="504" width="17" height="36" rx="8.500"/><rect x="824" y="504" width="17" height="36" rx="8.500"/>
          </g>
        </defs>
        <path class="plate" d="M127 318H341q6 0 6-7V265q0-12 12-12h51q12 0 12 12v46q0 7 6 7H796q6 0 6-7V265q0-12 12-12h51q12 0 12 12v46q0 7 6 7H1097V943H883q-6 0-6 7v46q0 12-12 12H814q-12 0-12-12V950q0-7-6-7H428q-6 0-6 7v46q0 12-12 12H359q-12 0-12-12V950q0-7-6-7H127z"/>
        <use href="#holes"/><use href="#holes" transform="matrix(1 0 0 -1 0 1261)"/>
        <rect class="mark" x="1080" y="928" width="6" height="4"/>
        <g class="wcs">
          <path class="gy" d="M612 630V540"/><path class="ga" d="M612 525l-4 22h8zM612 577l-3 12 3 3 3-3z"/><path class="ga" d="M612 596l-3 14 3 14 3-14z"/>
          <path class="rx" d="M612 630H705"/><path class="ra" d="M717 630l-22-3v6zM665 630l-12-3-12 3 12 3z"/>
          <text class="tg" x="617" y="526">YM</text><text class="tg" x="617" y="574">YC</text><text class="tr" x="655" y="626">XC</text><text class="tr" x="701" y="626">XM</text><text class="tb2" x="613" y="631">ZM</text>
          <rect x="621" y="620" width="9" height="11" fill="none" stroke="#1c50f0" stroke-width=".8"/>
          <circle cx="612" cy="630" r="3" fill="#1040d0"/>
        </g>
        <g class="triad">
          <rect x="63" y="927" width="25" height="26" fill="#d2d2d2" stroke="#bcbcbc"/>
          <path d="M62.500 953V920" stroke="#4c8a4c" stroke-width="1.500"/><path d="M62.500 913l-3 11h6z" fill="#2f9a2f"/>
          <path d="M62 953h34" stroke="#c86a6a" stroke-width="1.500"/><path d="M105 953l-12-3v6z" fill="#d03030"/>
          <rect x="59" y="949" width="7" height="8" rx="1" fill="#1040e0"/>
          <text class="tg" x="58.500" y="910">Y</text><text class="tr" x="106" y="958">X</text>
        </g>
      </svg>
    </div>
  </section>

  <aside class="strip">
    <i class="hgrip"></i>
    <span class="si on"><svg class="i"><use href="#nv1"/></svg></span>
    <span class="si"><svg class="i"><use href="#nv2"/></svg></span>
    <span class="si"><svg class="i"><use href="#nv3"/></svg></span>
    <span class="si"><svg class="i"><use href="#nv4"/></svg></span>
    <span class="si off"><svg class="i"><use href="#drl"/></svg></span>
    <span class="si"><svg class="i"><use href="#nv6"/></svg></span>
    <span class="si off"><svg class="i"><use href="#nv7"/></svg></span>
    <span class="si off"><svg class="i"><use href="#swr"/></svg></span>
    <span class="si off"><svg class="i"><use href="#cktl"/></svg></span>
    <span class="si off"><svg class="i"><use href="#scv"/></svg></span>
    <span class="si"><svg class="i"><use href="#cn1"/></svg><b class="c n si-c"></b></span>
    <span class="si"><svg class="i"><use href="#cn2"/></svg><b class="c n si-c"></b></span>
    <span class="si"><svg class="i"><use href="#cn3"/></svg><b class="c n si-c"></b></span>
    <b class="larr"></b>
  </aside>

  <section class="panel">
    <header class="phead"><i class="pbox"></i><span>部件导航器</span></header>
    <div class="table">
      <div class="thead"><span class="th1">名称<b class="sorta"></b></span><span>最新</span><span>附注</span><span></span></div>
      <div class="tbody">
        <i class="dv1"></i><i class="dv2"></i>
        <div class="row"><div class="cell"><i class="ex p"></i><svg class="n16 wide"><use href="#mvw"/></svg><span>模型视图</span></div></div>
        <div class="row"><div class="cell"><i class="ex p"></i><svg class="n14" viewBox="0 0 15 14"><use href="#ck"/></svg><svg class="n16"><use href="#cmr"/></svg><span>摄像机</span></div></div>
        <div class="row"><div class="cell"><i class="ex p"></i><svg class="n16 wide"><use href="#nfl"/></svg><span>用户表达式</span></div></div>
        <div class="row"><div class="cell"><i class="ex p"></i><svg class="n16 wide"><use href="#nfd"/></svg><span>组</span></div></div>
        <div class="row"><div class="cell"><i class="ex p"></i><svg class="n16 wide"><use href="#nfd"/></svg><span>非时间戳记几何体</span></div></div>
        <div class="row"><div class="cell"><i class="ex m"></i><svg class="n16 wide"><use href="#nfd"/></svg><span>模型历史记录</span></div></div>
        <div class="row"><div class="cell ind"><i class="cb"><svg viewBox="0 0 15 14"><use href="#ck"/></svg></i><svg class="n16"><use href="#obx"/></svg><span class="dim">体 (0)</span></div><div class="cell2"><svg class="n14" viewBox="0 0 15 14"><use href="#ck"/></svg></div></div>
        <div class="row"><div class="cell ind"><i class="cb"><svg viewBox="0 0 15 14"><use href="#ck"/></svg></i><svg class="n16"><use href="#obx"/></svg><span class="dim">体 (1)</span></div><div class="cell2"><svg class="n14" viewBox="0 0 15 14"><use href="#ck"/></svg></div></div>
        <div class="row"><div class="cell ind"><i class="cb"><svg viewBox="0 0 15 14"><use href="#ck"/></svg></i><svg class="n16"><use href="#obx"/></svg><span>体 (2)</span></div><div class="cell2"><svg class="n14" viewBox="0 0 15 14"><use href="#ck"/></svg></div></div>
        <div class="row"><div class="cell ind"><i class="cb"><svg viewBox="0 0 15 14"><use href="#ck"/></svg></i><svg class="n16"><use href="#obx"/></svg><span class="dim">体 (4)</span></div><div class="cell2"><svg class="n14" viewBox="0 0 15 14"><use href="#ck"/></svg></div></div>
      </div>
    </div>
    <div class="split"></div>
    <div class="sect"><span>相关性</span><i class="chev"></i></div>
    <div class="sect"><span>细节</span><i class="chev"></i></div>
    <div class="sect"><span>预览</span><i class="chev"></i></div>
  </section>

  <aside class="rstrip">
    <span class="ri gear"><svg class="i"><g fill="none" stroke="#333" stroke-width="2"><circle cx="13" cy="13" r="5.500"/><path d="M13 4v3M13 19v3M5.500 8.500l2.500 1.500M18 16l2.500 1.500M5.500 17.500L8 16M18 10l2.500-1.500"/></g></svg></span>
    <span class="ri"><svg class="i"><use href="#rs1"/></svg></span>
    <span class="ri"><svg class="i"><use href="#rs2"/></svg></span>
    <span class="ri act"><svg class="i"><use href="#rs3"/></svg></span>
    <span class="ri"><svg class="i"><use href="#rs4"/></svg></span>
    <span class="ri"><svg class="i"><use href="#rs5"/></svg></span>
    <span class="ri"><svg class="i"><use href="#rs6"/></svg></span>
    <span class="ri"><svg class="i"><use href="#rs7"/></svg></span>
    <span class="ri mt13"><svg class="i"><use href="#rs8"/></svg></span>
    <span class="ri mt11"><svg class="i"><use href="#rs9"/></svg></span>
    <span class="ri mt11"><svg class="i"><use href="#rsa"/></svg></span>
    <span class="ri"><svg class="i"><use href="#rsb"/></svg></span>
    <span class="ri"><svg class="i"><use href="#rsc"/></svg></span>
    <span class="ri"><svg class="i"><use href="#rsd"/></svg></span>
  </aside>
</main>

<footer class="status"><span>在工序导航器中编辑对象，或者是使用“插入”新建对象</span><svg class="stic" viewBox="0 0 16 20"><path d="M1 4V1h3M12 1h3v3M1 16v3h3M12 19h3v-3" fill="none" stroke="#888"/><rect x="4" y="4" width="8" height="12" fill="#4a5a80"/><rect x="5" y="6" width="6" height="5" fill="#b8c8e8"/></svg></footer>

<div class="task">
  <span class="ti"><svg class="k"><use href="#win"/></svg></span>
  <span class="ti"><svg class="k"><use href="#flm"/></svg></span>
  <span class="ti"><svg class="k"><use href="#pin"/></svg></span>
  <span class="ti"><svg class="k"><use href="#vmw"/></svg></span>
  <span class="ti"><svg class="k"><use href="#tab"/></svg></span>
  <span class="ti"><svg class="k"><use href="#ydr"/></svg></span>
  <span class="ti"><span class="ydao">有道</span></span>
  <span class="ti run"><svg class="k"><use href="#moo"/></svg></span>
  <span class="ti run"><svg class="k"><use href="#fdr"/></svg></span>
  <span class="ti run"><svg class="k"><use href="#globe"/></svg></span>
  <span class="ti run act"><svg class="k"><use href="#globe"/></svg></span>
  <div class="tray">
    <span class="tr24"><svg class="tk" viewBox="0 0 14 8"><path d="M1 7l6-6 6 6" fill="none" stroke="#7cc4f0" stroke-width="1.300"/></svg></span>
    <span class="tr24"><svg class="tn" viewBox="0 0 18 18"><path d="M1 1h14v11H8v-3H1zM1 9v5h7" fill="none" stroke="#fff"/><path d="M12 10l5 7H7z" fill="#f0c020"/></svg></span>
    <span class="tr24"><svg class="tn" viewBox="0 0 18 18"><path d="M2 6h3l4-4v14l-4-4H2z" fill="none" stroke="#fff"/><path d="M12 7l4 4M16 7l-4 4" stroke="#fff"/></svg></span>
    <span class="tr24 zh">中</span>
    <span class="tr34"><span class="g6">6</span></span>
    <span class="clock"><span>10:05</span><span>2020/6/27</span></span>
    <span class="note"><svg class="tn" viewBox="0 0 18 18"><path d="M2 2h14v11H7l-2 3v-3H2z" fill="#fff"/><path d="M4 5h10M4 8h10M4 11h7" stroke="#222"/></svg><span class="nb">2</span></span>
  </div>
</div>

<svg class="overlay" viewBox="0 0 1919 1079" aria-hidden="true">
  <path d="M1695 541L1872 374" stroke="#e01818" fill="none"/><path d="M1878 368l-11 5 5 6z" fill="#e01818"/>
  <path d="M1672 985l36 21v38l-36 21-35-21v-38z" fill="#5ab9f0" fill-opacity=".38"/>
  <path d="M1637 1040h71v4l-36 21-35-21z" fill="#0e5f8c" fill-opacity=".85"/>
  <path d="M1672 985q-34 14-34 58M1708 1006q-14-16-36-21M1708 1030q-8 18-36 35" fill="none" stroke="#fff" stroke-opacity=".7"/>
  <path d="M1672 1007l18 11v20l-18 11-18-11v-20z" fill="#c4e6fa" stroke="#fff" stroke-width="2"/>
  <path d="M1654 1018l18 10 18-10M1672 1028v21" fill="none" stroke="#fff"/>
  <text class="wm" x="1718" y="1051">WWW.3DSJW.COM</text>
</svg>
</body>
</html>
```
FILE: styles.css
```css
*{box-sizing:border-box}
html,body{margin:0;padding:0}
body{width:1919px;height:1079px;overflow:hidden;position:relative;background:#fff;display:flex;flex-direction:column;font:12px "Noto Sans","Noto Sans CJK SC",sans-serif;color:#222}
svg text{font-family:"Liberation Sans","Noto Sans CJK SC",sans-serif}
i,b{font-style:normal;display:block;flex:none}
.defs{position:absolute;width:0;height:0;overflow:hidden}
.title{height:26px;flex:none;display:flex;align-items:center;background:#fff}
.logo{width:41px;padding-left:4px;font:700 20px "Liberation Sans",sans-serif;letter-spacing:2px;color:#8c9baa;border-right:1px solid #d5d5d5;height:22px;line-height:22px}
.ttext{margin-left:5px;font-size:12.500px;color:#222;padding-bottom:4px}
.siemens{margin-left:auto;font:700 13.500px "Liberation Sans",sans-serif;letter-spacing:.3px;color:#0a9a98;margin-right:26px;padding-top:2px}
.winbtns{display:flex;align-items:center;width:65px;height:20px;position:relative}
.wmin{width:8px;height:2px;background:#444;margin:10px 14px 0 1px}
.wres{width:12px;height:11px;border:1.500px solid #444;margin-right:12px}
.wcl{width:12px;height:12px}
.menu{height:27px;flex:none;background:#569fb9;display:flex;align-items:center;gap:14px;color:#16262e;white-space:nowrap;font-size:11px;padding-bottom:2px}
.menu u{text-decoration:underline}
.gripw{width:4px;height:22px;margin-right:-4px;background:repeating-linear-gradient(#d4e6ec 0 2px,transparent 2px 4px);background-size:2px 100%;background-repeat:no-repeat}
.far{margin-left:11px}
.tb{height:34px;flex:none;display:flex;align-items:center;border-bottom:2px solid #e2e2e2;background:#fff;white-space:nowrap}
.i{width:26px;height:26px;margin:0 2.500px;flex:none}
.j{width:20px;height:20px;margin:0 1px;flex:none}
.ml2{margin-left:3px}
.off{filter:grayscale(1) opacity(.38)}
.grip{width:6px;height:100%;background:repeating-linear-gradient(#a8a8a8 0 1.500px,transparent 1.500px 3px) 2px 0/2px 100% no-repeat}
.g7{width:7px}
.sep{width:5px;height:100%;background:linear-gradient(#dedede,#dedede) 2px 0/1.500px 100% no-repeat}
.sep7{width:7px}
.sg{width:8px;height:100%;background:linear-gradient(#dedede,#dedede) 0 0/1.500px 100% no-repeat,repeating-linear-gradient(#a8a8a8 0 1.500px,transparent 1.500px 3px) 4px 0/2px 100% no-repeat}
.sg12{width:12px;height:100%;background:linear-gradient(#dedede,#dedede) 0 0/1.500px 100% no-repeat,repeating-linear-gradient(#a8a8a8 0 1.500px,transparent 1.500px 3px) 5px 0/2px 100% no-repeat}
.c{width:13px;height:4px;position:relative}
.c::after{content:"";position:absolute;left:50%;top:0;margin-left:-3.500px;border:3.500px solid transparent;border-top:4px solid #222;border-bottom:0}
.n{width:10px}.n8{width:8px}.n10{width:10px}
.lbl{font-size:12px;flex:none}
.w26{width:26px;text-align:center}
.w51{width:51px;margin-left:-1px}
.sp38{width:38px}.sp21{width:21px}
.ovf{width:14px;display:flex;flex-direction:column;align-items:center;gap:5px;font:700 12px/12px "Liberation Sans",sans-serif;flex:none;height:30px;justify-content:flex-end}
.m3{margin-left:3px}
.end{margin-left:auto;margin-right:2px}
.num{width:49px;height:24px;border:1px solid #a8a8a8;display:flex;align-items:center;justify-content:space-between;padding:0 8px 0 3px;margin:0 5px 0 0;flex:none;font-size:12px}
.tbtext{display:flex;align-items:center;gap:7.300px;font-size:11px;margin-left:4px;color:#222}
.wsld{margin-right:-5px}
.isld{margin:0 3px 0 0}
.sel{height:32px;flex:none;display:flex;align-items:center;border-bottom:2px solid #9a9ea3;background:#fff;padding-left:5px}
.combo{height:19px;border:1px solid #9c9c9c;display:flex;align-items:center;justify-content:space-between;padding:0 4px 0 3px;margin-right:8px;flex:none;font-size:12px;background:#fff}
.c1{width:132px}.c2{width:139px;margin-right:4px}
.sel .sep{height:24px}
.work{height:797px;flex:none;display:flex}
.vcol{width:1222px;flex:none;display:flex;flex-direction:column}
.tabbar{height:23px;flex:none;border-bottom:2px solid #569fb9}
.tab{height:21px;width:102px;background:#569fb9;color:#fff;display:flex;align-items:center;padding-left:4px;font-size:12.500px}
.tic{width:16px;height:18px;margin-right:6px}
.tx{margin-left:5px;font-size:12px;font-weight:700}
.view{flex:1;background:linear-gradient(#b1b3b5,#c8c9cb 25%,#e8e9eb);border:1px solid #f0a650;border-left-width:2px;position:relative;display:flex}
.canvas{width:1220px;height:773px;display:block;flex:none}
.plate{fill:#858585;stroke:#4a4a4a;stroke-width:1}
.mark{fill:#222}
.gy{stroke:#2f9a2f;stroke-width:2;fill:none}
.ga{fill:#2fa02f}
.rx{stroke:#d84040;stroke-width:2;fill:none}
.ra{fill:#d84040}
.tg{font-size:14px;fill:#2fa02f}
.tr{font-size:14px;fill:#d84040}
.tb2{font-size:14px;fill:#1c50f0}
.strip{width:49px;flex:none;border-right:1px solid #9a9ea3;background:#fff;display:flex;flex-direction:column;align-items:center;position:relative}
.hgrip{width:38px;height:8px;background:repeating-linear-gradient(90deg,#a8a8a8 0 2px,transparent 2px 4px) 0 3px/100% 2px no-repeat;flex:none}
.si{width:31px;height:31px;display:flex;align-items:center;justify-content:center;flex:none;position:relative}
.si.on{background:#c8e2ea;border:1px solid #a8ccd8}
.si-c{position:absolute;right:-9px;top:14px}
.larr{border:3px solid transparent;border-right:4px solid #222;border-left:0;align-self:flex-start;margin:8px 0 0 10px}
.panel{width:617px;flex:none;background:#fff;display:flex;flex-direction:column;padding:0 6px 0 10px;border-bottom:1px solid #9a9ea3}
.phead{height:28px;flex:none;display:flex;align-items:center;padding-left:2px;gap:11px;font-size:12px}
.pbox{width:12px;height:11px;border:1.500px solid #333;border-top-width:2.500px}
.table{height:683px;flex:none;border:1px solid #dcdcdc;display:flex;flex-direction:column}
.thead{height:22px;flex:none;background:#eee;display:grid;grid-template-columns:200px 100px 100px 1fr;align-items:center;border-bottom:2px solid #dadada}
.thead span{padding:2px 0 0 6px;height:100%;display:flex;align-items:center;border-right:1px solid #d8d8d8}
.th1{position:relative}
.sorta{border:4px solid transparent;border-bottom:5px solid #222;border-top:0;margin-left:20px}
.tbody{flex:1;position:relative;background:linear-gradient(#e4e4e4,#e4e4e4) 199px 0/1px 100% no-repeat,linear-gradient(#e4e4e4,#e4e4e4) 299px 0/1px 100% no-repeat,linear-gradient(#e4e4e4,#e4e4e4) 399px 0/1px 100% no-repeat,repeating-linear-gradient(#fff 0 19px,#e6e6e6 19px 20px,#f8f8f8 20px 39px,#e6e6e6 39px 40px)}
.row{height:20px;display:grid;grid-template-columns:200px 100px;align-items:center;position:relative}
.cell{display:flex;align-items:center;padding-left:5px;height:20px;white-space:nowrap}
.cell2{padding-left:5px;display:flex;align-items:center}
.ind{padding-left:40px}
.ex{width:10px;height:10px;border:1px solid #c4c4c4;background:#fff;position:relative;margin-right:4px;flex:none}
.ex::before{content:"";position:absolute;left:1px;top:3px;width:6px;height:2px;background:#222}
.ex.p::after{content:"";position:absolute;left:3px;top:1px;width:2px;height:6px;background:#222}
.n16{width:16px;height:16px;flex:none;margin-right:3px}
.wide{margin-right:4px}
.n14{width:14px;height:14px;flex:none;margin-right:2px}
.cb{width:12px;height:12px;border:1.500px solid #111;background:#fff;margin-right:2px;flex:none}
.cb svg{width:11px;height:11px;display:block;overflow:visible}
.dim{color:#9a9a9a}
.dv1{position:absolute;left:9px;top:10px;width:1px;height:100px;border-left:1px dotted #888}
.dv2{position:absolute;left:29px;top:121px;width:11px;height:70px;border-left:1px dotted #888;background:repeating-linear-gradient(#888 0 1px,transparent 1px 20px) 0 9px/100% 100% no-repeat}
.split{height:6px;margin-top:2px;flex:none;background:#cbcbcb;border:1px solid #b4b4b4}
.sect{height:24px;flex:none;display:flex;align-items:center;justify-content:space-between;padding:1px 7px 0 6px;border-bottom:2px solid #d0d0d0;color:#1f6d96;font-size:14px}
.chev{width:8px;height:8px;border:solid #1f6d96;border-width:0 2px 2px 0;transform:rotate(45deg) translate(-2px,-2px)}
.rstrip{width:31px;flex:none;background:#dadada;display:flex;flex-direction:column;border-bottom:1px solid #9a9ea3}
.ri{height:42px;display:flex;align-items:center;justify-content:center;flex:none;padding-right:3px}
.ri .i{width:27px;height:27px;margin:0}
.gear{height:41px;align-items:flex-start;padding-top:2px}
.gear .i{width:24px;height:24px}
.ri.act{background:#fff;height:44px;margin-left:-1px;border:1px solid #c8c8c8;border-right:0}
.mt13{margin-top:13px}.mt11{margin-top:11px}
.status{height:22px;flex:none;display:flex;align-items:center;justify-content:space-between;padding:0 54px 2px 3px;background:#fff;font-size:12px}
.stic{width:16px;height:20px}
.task{height:39px;flex:none;background:#0d141b;display:flex;align-items:stretch;color:#fff}
.ti{width:49px;display:flex;align-items:center;justify-content:center;flex:none;border-bottom:2px solid transparent}
.ti.run{border-bottom-color:#4aa3e0;margin:0 4px;width:41px}
.ti.act{background:#38424a;margin:0;width:49px}
.k{width:26px;height:26px}
.ydao{width:24px;height:24px;border-radius:3px;background:#e21c1c;color:#fff;font-size:11px;line-height:24px;text-align:center;letter-spacing:-1px}
.tray{margin-left:auto;display:flex;align-items:center;height:100%}
.tr24{width:24px;display:flex;align-items:center;justify-content:center;flex:none}
.tk{width:14px;height:8px}
.tn{width:18px;height:18px}
.zh{font-size:14px}
.tr34{width:34px;display:flex;justify-content:center}
.g6{width:20px;height:22px;border:2.500px solid #10c060;border-radius:50%;display:flex;align-items:center;justify-content:center;font-size:12px}
.clock{width:76px;display:flex;flex-direction:column;align-items:center;gap:2px;font-size:13px;line-height:17px}
.note{width:36px;position:relative;display:flex;justify-content:center;margin-right:14px}
.nb{position:absolute;left:20px;top:7px;width:16px;height:16px;border-radius:50%;background:#3a3a3a;border:1px solid #ccc;font-size:11px;font-weight:700;line-height:14px;text-align:center}
.overlay{position:absolute;left:0;top:0;width:1919px;height:1079px;pointer-events:none}
.wm{font-size:15.500px;letter-spacing:2.700px;fill:#7c868c;font-weight:700}
```
